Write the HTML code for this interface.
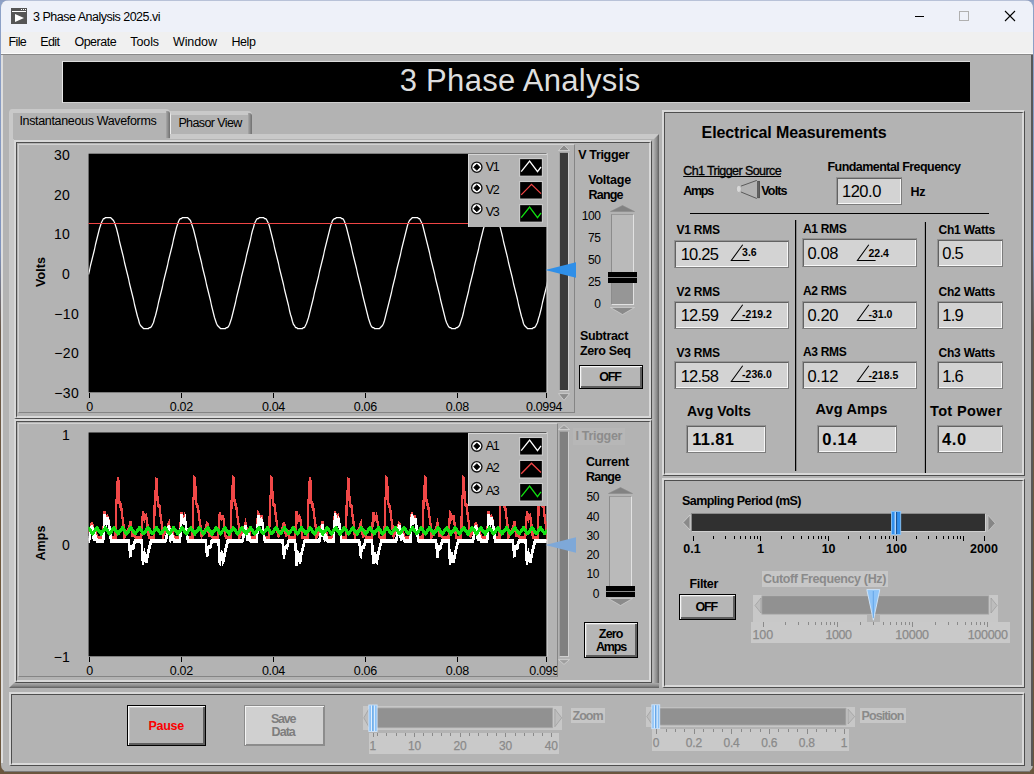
<!DOCTYPE html>
<html><head><meta charset="utf-8"><title>3 Phase Analysis 2025.vi</title>
<style>
html,body{margin:0;padding:0;}
body{width:1034px;height:774px;overflow:hidden;position:relative;background:#5a4632;font-family:"Liberation Sans",sans-serif;}
div,svg{position:absolute;box-sizing:border-box;}
.t{white-space:nowrap;}
.t span{display:inline-block;}
.ind{background:#d3d3d3;border:1px solid;border-color:#949494 #7c7c7c #7c7c7c #949494;box-shadow:inset 1px 1px 0 #626262,inset -1px -1px 0 #f8f8f8;}
.fr{border:1px solid #6e6e6e;box-shadow:inset 0 0 0 1px #e4e4e4;}
.btn{background:#b6b6b6;border:1px solid #000;box-shadow:inset 1px 1px 0 #f6f6f6,inset -2px -2px 0 #5e5e5e,inset 2px 2px 0 #c8c8c8;}
</style></head><body>

<div style="left:0px;top:0px;width:1034px;height:774px;background:linear-gradient(180deg,#8ea2c8 0px,#7f93bd 250px,#6a5848 330px,#70583c 600px,#6a563e 774px);"></div>
<div style="left:1px;top:0px;width:1032px;height:772px;background:#b3b3b3;border-radius:8px 8px 7px 7px;overflow:hidden;"></div>
<div style="left:1px;top:0px;width:1032px;height:32px;background:#eef1f9;border-radius:8px 8px 0 0;"></div>
<div style="left:1px;top:32px;width:1032px;height:21px;background:#f0f0f0;"></div>
<div style="left:1px;top:53px;width:1032px;height:1px;background:#fbfbfb;"></div>
<div style="left:1px;top:54px;width:1032px;height:1px;background:#8a8a8a;"></div>
<div style="left:1px;top:55px;width:2px;height:708px;background:#dedede;"></div>
<div style="left:1031px;top:55px;width:2px;height:711px;background:#585858;"></div>
<div style="left:4px;top:770.5px;width:1026px;height:1.5px;background:#7a7a7a;"></div>
<div style="left:0px;top:0px;width:1034px;height:1px;background:rgba(140,155,190,0.55);"></div>
<svg style="left:11px;top:8px;" width="17" height="17" viewBox="0 0 17 17"><rect x="0" y="0" width="16" height="16" fill="#555"/><rect x="1" y="3" width="14" height="1" fill="#fff"/><rect x="10" y="1" width="1" height="1" fill="#fff"/><rect x="12" y="1" width="1" height="1" fill="#fff"/><rect x="14" y="1" width="1" height="1" fill="#fff"/><path d="M4 6 L13 10 L4 14 Z" fill="#fff"/></svg>
<div class="t" style="top:7.60px;font-size:12.5px;line-height:18px;color:#000;letter-spacing:-0.499px;left:33px;"><span style="">3 Phase Analysis 2025.vi</span></div>
<svg style="left:915px;top:10px;" width="110" height="14" viewBox="0 0 110 14"><path d="M-1 6.5 H9" stroke="#000" stroke-width="1"/><rect x="44.5" y="1.5" width="9" height="9" fill="none" stroke="#b0b0b0" stroke-width="1"/><path d="M90 1 L100 11 M100 1 L90 11" stroke="#000" stroke-width="1.1"/></svg>
<div class="t" style="top:32.70px;font-size:12.5px;line-height:18px;color:#000;letter-spacing:-0.639px;left:8.6px;"><span style="">File</span></div>
<div class="t" style="top:32.70px;font-size:12.5px;line-height:18px;color:#000;letter-spacing:-0.587px;left:40.2px;"><span style="">Edit</span></div>
<div class="t" style="top:32.70px;font-size:12.5px;line-height:18px;color:#000;letter-spacing:-0.482px;left:74.4px;"><span style="">Operate</span></div>
<div class="t" style="top:32.70px;font-size:12.5px;line-height:18px;color:#000;letter-spacing:-0.098px;left:130.3px;"><span style="">Tools</span></div>
<div class="t" style="top:32.70px;font-size:12.5px;line-height:18px;color:#000;letter-spacing:-0.111px;left:173px;"><span style="">Window</span></div>
<div class="t" style="top:32.70px;font-size:12.5px;line-height:18px;color:#000;letter-spacing:-0.405px;left:231.4px;"><span style="">Help</span></div>
<div style="left:62px;top:61px;width:908px;height:42px;background:#000;border-left:1px solid #e8e8e8;border-bottom:1px solid #d0d0d0;border-top:1px solid #dcdcdc;"></div>
<div class="t" style="top:61.00px;font-size:31px;line-height:40px;color:#dedede;letter-spacing:0.307px;left:320px;width:400.307px;text-align:center;"><span style="">3 Phase Analysis</span></div>
<div style="left:9px;top:134px;width:650px;height:554px;background:#b3b3b3;"></div>
<div style="left:9px;top:134px;width:650px;height:5px;background:#c9c9c9;"></div>
<div style="left:9px;top:134px;width:5px;height:554px;background:#c9c9c9;"></div>
<div style="left:654px;top:134px;width:5px;height:554px;background:linear-gradient(90deg,#ababab,#8c8c8c 55%,#5e5e5e);"></div>
<div style="left:9px;top:683px;width:650px;height:5px;background:linear-gradient(180deg,#ababab,#8c8c8c 55%,#5e5e5e);"></div>
<svg style="left:9px;top:683px;" width="5" height="5" viewBox="0 0 5 5"><path d="M0 0 H5 L0 5 Z" fill="#c9c9c9"/></svg>
<svg style="left:654px;top:134px;" width="5" height="5" viewBox="0 0 5 5"><path d="M0 0 H5 L0 5 Z" fill="#c9c9c9"/></svg>
<div style="left:170px;top:111px;width:82px;height:23px;background:#b3b3b3;border-top:4px solid #c9c9c9;border-left:1px solid #ececec;border-radius:0 4px 0 0;"></div>
<div style="left:248px;top:113px;width:4px;height:21px;background:linear-gradient(90deg,#a8a8a8,#707070);border-radius:0 3px 0 0;"></div>
<div class="t" style="top:113.80px;font-size:12.5px;line-height:18px;color:#000;letter-spacing:-0.605px;left:178.4px;"><span style="">Phasor View</span></div>
<div style="left:9px;top:109px;width:161px;height:30px;background:#b3b3b3;border-top:4px solid #c9c9c9;border-left:4px solid #c9c9c9;border-radius:4px 4px 0 0;"></div>
<div style="left:166px;top:111px;width:4px;height:27px;background:linear-gradient(90deg,#a8a8a8,#707070);border-radius:0 3px 0 0;"></div>
<div class="t" style="top:112.00px;font-size:12.5px;line-height:18px;color:#000;letter-spacing:-0.337px;left:19.4px;"><span style="">Instantaneous Waveforms</span></div>
<div style="left:14px;top:140px;width:638px;height:279px;border-left:2px solid #d9d9d9;border-top:2px solid #d9d9d9;border-right:1px solid #4e4e4e;border-bottom:1px solid #4e4e4e;"><div style="left:0;top:0;right:0;bottom:0;border-left:1px solid #4e4e4e;border-top:1px solid #4e4e4e;border-right:2px solid #d9d9d9;border-bottom:2px solid #d9d9d9;"></div></div>
<div style="left:14px;top:419px;width:638px;height:264px;border-left:2px solid #d9d9d9;border-top:2px solid #d9d9d9;border-right:1px solid #4e4e4e;border-bottom:1px solid #4e4e4e;"><div style="left:0;top:0;right:0;bottom:0;border-left:1px solid #4e4e4e;border-top:1px solid #4e4e4e;border-right:2px solid #d9d9d9;border-bottom:2px solid #d9d9d9;"></div></div>
<div style="left:18px;top:144px;width:557px;height:269px;border-left:1px solid #d2d2d2;border-top:1px solid #d2d2d2;border-right:1px solid #858585;border-bottom:1px solid #858585;"></div>
<svg style="left:80px;top:151px;" width="480" height="244" viewBox="0 0 480 244"><rect x="8.60" y="2.70" width="458.00" height="238.60" fill="#000"/></svg>
<svg style="left:545px;top:153px;" width="4" height="240" viewBox="0 0 4 240"><rect x="1.6" y="0" width="1.4" height="239.3" fill="#c8c8c8"/></svg>
<div class="t" style="top:146.00px;font-size:14px;line-height:18px;color:#000;letter-spacing:0.211px;left:-330.2px;width:400.211px;text-align:right;"><span style="">30</span></div>
<div class="t" style="top:185.70px;font-size:14px;line-height:18px;color:#000;letter-spacing:0.211px;left:-330.2px;width:400.211px;text-align:right;"><span style="">20</span></div>
<div class="t" style="top:225.40px;font-size:14px;line-height:18px;color:#000;letter-spacing:0.211px;left:-330.2px;width:400.211px;text-align:right;"><span style="">10</span></div>
<div class="t" style="top:265.00px;font-size:14px;line-height:18px;color:#000;left:-330.2px;width:400.000px;text-align:right;"><span style="">0</span></div>
<div class="t" style="top:304.50px;font-size:14px;line-height:18px;color:#000;letter-spacing:0.417px;left:-321.2px;width:400.417px;text-align:right;"><span style="">−10</span></div>
<div class="t" style="top:344.20px;font-size:14px;line-height:18px;color:#000;letter-spacing:0.417px;left:-321.2px;width:400.417px;text-align:right;"><span style="">−20</span></div>
<div class="t" style="top:383.70px;font-size:14px;line-height:18px;color:#000;letter-spacing:0.417px;left:-321.2px;width:400.417px;text-align:right;"><span style="">−30</span></div>
<div class="t" style="left:0.7000000000000028px;top:263.3px;width:80px;height:18px;line-height:18px;text-align:center;font-size:12.5px;font-weight:bold;letter-spacing:0.1px;transform:rotate(-90deg);">Volts</div>
<div class="t" style="top:397.70px;font-size:12.5px;line-height:18px;color:#000;left:-110.5px;width:400.000px;text-align:center;"><span style="letter-spacing:-0.35px;">0</span></div>
<div class="t" style="top:397.70px;font-size:12.5px;line-height:18px;color:#000;left:-18.69999999999999px;width:400.000px;text-align:center;"><span style="letter-spacing:-0.35px;">0.02</span></div>
<div class="t" style="top:397.70px;font-size:12.5px;line-height:18px;color:#000;left:73.39999999999998px;width:400.000px;text-align:center;"><span style="letter-spacing:-0.35px;">0.04</span></div>
<div class="t" style="top:397.70px;font-size:12.5px;line-height:18px;color:#000;left:165.3px;width:400.000px;text-align:center;"><span style="letter-spacing:-0.35px;">0.06</span></div>
<div class="t" style="top:397.70px;font-size:12.5px;line-height:18px;color:#000;left:257.3px;width:400.000px;text-align:center;"><span style="letter-spacing:-0.35px;">0.08</span></div>
<div class="t" style="top:397.70px;font-size:12.5px;line-height:18px;color:#000;left:162.20000000000005px;width:400.000px;text-align:right;"><span style="letter-spacing:-0.35px;">0.0994</span></div>
<div style="left:89px;top:393px;width:1px;height:5px;background:#000;"></div>
<div style="left:181px;top:393px;width:1px;height:5px;background:#000;"></div>
<div style="left:273px;top:393px;width:1px;height:5px;background:#000;"></div>
<div style="left:365px;top:393px;width:1px;height:5px;background:#000;"></div>
<div style="left:457px;top:393px;width:1px;height:5px;background:#000;"></div>
<div style="left:546px;top:393px;width:1px;height:5px;background:#000;"></div>
<div style="left:18px;top:423px;width:540px;height:254px;border-left:1px solid #d2d2d2;border-top:1px solid #d2d2d2;border-right:1px solid #858585;border-bottom:1px solid #858585;"></div>
<svg style="left:80px;top:430px;" width="480" height="229" viewBox="0 0 480 229"><rect x="8.60" y="2.50" width="458.00" height="223.80" fill="#000"/></svg>
<svg style="left:545px;top:432px;" width="4" height="225" viewBox="0 0 4 225"><rect x="1.6" y="0" width="1.4" height="224.3" fill="#c8c8c8"/></svg>
<div class="t" style="top:426.00px;font-size:14px;line-height:18px;color:#000;left:-330.2px;width:400.000px;text-align:right;"><span style="">1</span></div>
<div class="t" style="top:536.20px;font-size:14px;line-height:18px;color:#000;left:-330.2px;width:400.000px;text-align:right;"><span style="">0</span></div>
<div class="t" style="top:648.20px;font-size:14px;line-height:18px;color:#000;letter-spacing:0.016px;left:-330.2px;width:400.016px;text-align:right;"><span style="">−1</span></div>
<div class="t" style="left:1.2000000000000028px;top:534px;width:80px;height:18px;line-height:18px;text-align:center;font-size:12.5px;font-weight:bold;letter-spacing:0.1px;transform:rotate(-90deg);">Amps</div>
<div class="t" style="top:661.70px;font-size:12.5px;line-height:18px;color:#000;left:-110.5px;width:400.000px;text-align:center;"><span style="letter-spacing:-0.35px;">0</span></div>
<div class="t" style="top:661.70px;font-size:12.5px;line-height:18px;color:#000;left:-18.69999999999999px;width:400.000px;text-align:center;"><span style="letter-spacing:-0.35px;">0.02</span></div>
<div class="t" style="top:661.70px;font-size:12.5px;line-height:18px;color:#000;left:73.39999999999998px;width:400.000px;text-align:center;"><span style="letter-spacing:-0.35px;">0.04</span></div>
<div class="t" style="top:661.70px;font-size:12.5px;line-height:18px;color:#000;left:165.3px;width:400.000px;text-align:center;"><span style="letter-spacing:-0.35px;">0.06</span></div>
<div class="t" style="top:661.70px;font-size:12.5px;line-height:18px;color:#000;left:257.3px;width:400.000px;text-align:center;"><span style="letter-spacing:-0.35px;">0.08</span></div>
<div style="left:529.3px;top:661px;width:27.700000000000045px;height:20px;overflow:hidden;">
<div class="t" style="top:0.70px;font-size:12.5px;line-height:18px;color:#000;left:0px;"><span style="letter-spacing:-0.35px;">0.0994</span></div>
</div>
<div style="left:89px;top:657px;width:1px;height:5px;background:#000;"></div>
<div style="left:181px;top:657px;width:1px;height:5px;background:#000;"></div>
<div style="left:273px;top:657px;width:1px;height:5px;background:#000;"></div>
<div style="left:365px;top:657px;width:1px;height:5px;background:#000;"></div>
<div style="left:457px;top:657px;width:1px;height:5px;background:#000;"></div>
<div style="left:546px;top:657px;width:1px;height:5px;background:#000;"></div>
<svg style="left:88px;top:154px;overflow:hidden;clip-path:inset(0 1.4px 0 0.6px);" width="460" height="238" viewBox="0 0 460 238"><polyline points="0.5,120.5 1.5,116.5 2.5,111.5 3.5,107.5 4.5,103.5 5.5,99.5 6.5,95.5 7.5,90.5 8.5,86.5 9.5,82.5 10.5,78.5 11.5,74.5 12.5,71.5 13.5,68.5 14.5,66.5 15.5,64.5 16.5,64.5 17.5,63.5 18.5,63.5 19.5,63.5 20.5,63.5 21.5,63.5 22.5,63.5 23.5,64.5 24.5,65.5 25.5,66.5 26.5,68.5 27.5,71.5 28.5,74.5 29.5,78.5 30.5,82.5 31.5,87.5 32.5,91.5 33.5,95.5 34.5,99.5 35.5,103.5 36.5,108.5 37.5,112.5 38.5,116.5 39.5,120.5 40.5,124.5 41.5,129.5 42.5,133.5 43.5,137.5 44.5,141.5 45.5,145.5 46.5,150.5 47.5,154.5 48.5,158.5 49.5,162.5 50.5,165.5 51.5,169.5 52.5,171.5 53.5,172.5 54.5,173.5 55.5,174.5 56.5,174.5 57.5,174.5 58.5,174.5 59.5,174.5 60.5,174.5 61.5,173.5 62.5,173.5 63.5,172.5 64.5,170.5 65.5,168.5 66.5,164.5 67.5,161.5 68.5,157.5 69.5,153.5 70.5,148.5 71.5,144.5 72.5,140.5 73.5,136.5 74.5,132.5 75.5,127.5 76.5,123.5 77.5,119.5 78.5,115.5 79.5,111.5 80.5,106.5 81.5,102.5 82.5,98.5 83.5,94.5 84.5,90.5 85.5,85.5 86.5,81.5 87.5,77.5 88.5,73.5 89.5,70.5 90.5,67.5 91.5,65.5 92.5,64.5 93.5,64.5 94.5,63.5 95.5,63.5 96.5,63.5 97.5,63.5 98.5,63.5 99.5,63.5 100.5,64.5 101.5,65.5 102.5,66.5 103.5,69.5 104.5,72.5 105.5,75.5 106.5,79.5 107.5,83.5 108.5,87.5 109.5,92.5 110.5,96.5 111.5,100.5 112.5,104.5 113.5,108.5 114.5,113.5 115.5,117.5 116.5,121.5 117.5,125.5 118.5,130.5 119.5,134.5 120.5,138.5 121.5,142.5 122.5,146.5 123.5,151.5 124.5,155.5 125.5,159.5 126.5,163.5 127.5,166.5 128.5,169.5 129.5,171.5 130.5,172.5 131.5,173.5 132.5,174.5 133.5,174.5 134.5,174.5 135.5,174.5 136.5,174.5 137.5,174.5 138.5,173.5 139.5,173.5 140.5,172.5 141.5,170.5 142.5,167.5 143.5,164.5 144.5,160.5 145.5,156.5 146.5,152.5 147.5,148.5 148.5,143.5 149.5,139.5 150.5,135.5 151.5,131.5 152.5,127.5 153.5,122.5 154.5,118.5 155.5,114.5 156.5,110.5 157.5,106.5 158.5,101.5 159.5,97.5 160.5,93.5 161.5,89.5 162.5,85.5 163.5,80.5 164.5,76.5 165.5,73.5 166.5,69.5 167.5,67.5 168.5,65.5 169.5,64.5 170.5,64.5 171.5,63.5 172.5,63.5 173.5,63.5 174.5,63.5 175.5,63.5 176.5,64.5 177.5,64.5 178.5,65.5 179.5,67.5 180.5,69.5 181.5,72.5 182.5,76.5 183.5,80.5 184.5,84.5 185.5,88.5 186.5,93.5 187.5,97.5 188.5,101.5 189.5,105.5 190.5,109.5 191.5,114.5 192.5,118.5 193.5,122.5 194.5,126.5 195.5,130.5 196.5,135.5 197.5,139.5 198.5,143.5 199.5,147.5 200.5,151.5 201.5,156.5 202.5,160.5 203.5,163.5 204.5,167.5 205.5,170.5 206.5,171.5 207.5,173.5 208.5,173.5 209.5,174.5 210.5,174.5 211.5,174.5 212.5,174.5 213.5,174.5 214.5,174.5 215.5,173.5 216.5,173.5 217.5,171.5 218.5,169.5 219.5,166.5 220.5,163.5 221.5,159.5 222.5,155.5 223.5,151.5 224.5,147.5 225.5,143.5 226.5,138.5 227.5,134.5 228.5,130.5 229.5,126.5 230.5,122.5 231.5,117.5 232.5,113.5 233.5,109.5 234.5,105.5 235.5,101.5 236.5,96.5 237.5,92.5 238.5,88.5 239.5,84.5 240.5,80.5 241.5,76.5 242.5,72.5 243.5,69.5 244.5,66.5 245.5,65.5 246.5,64.5 247.5,64.5 248.5,63.5 249.5,63.5 250.5,63.5 251.5,63.5 252.5,63.5 253.5,64.5 254.5,64.5 255.5,65.5 256.5,67.5 257.5,70.5 258.5,73.5 259.5,77.5 260.5,81.5 261.5,85.5 262.5,89.5 263.5,93.5 264.5,98.5 265.5,102.5 266.5,106.5 267.5,110.5 268.5,114.5 269.5,119.5 270.5,123.5 271.5,127.5 272.5,131.5 273.5,135.5 274.5,140.5 275.5,144.5 276.5,148.5 277.5,152.5 278.5,156.5 279.5,160.5 280.5,164.5 281.5,167.5 282.5,170.5 283.5,172.5 284.5,173.5 285.5,173.5 286.5,174.5 287.5,174.5 288.5,174.5 289.5,174.5 290.5,174.5 291.5,174.5 292.5,173.5 293.5,172.5 294.5,171.5 295.5,169.5 296.5,166.5 297.5,162.5 298.5,158.5 299.5,154.5 300.5,150.5 301.5,146.5 302.5,142.5 303.5,138.5 304.5,133.5 305.5,129.5 306.5,125.5 307.5,121.5 308.5,116.5 309.5,112.5 310.5,108.5 311.5,104.5 312.5,100.5 313.5,95.5 314.5,91.5 315.5,87.5 316.5,83.5 317.5,79.5 318.5,75.5 319.5,71.5 320.5,68.5 321.5,66.5 322.5,65.5 323.5,64.5 324.5,63.5 325.5,63.5 326.5,63.5 327.5,63.5 328.5,63.5 329.5,63.5 330.5,64.5 331.5,64.5 332.5,66.5 333.5,68.5 334.5,70.5 335.5,74.5 336.5,78.5 337.5,82.5 338.5,86.5 339.5,90.5 340.5,94.5 341.5,98.5 342.5,103.5 343.5,107.5 344.5,111.5 345.5,115.5 346.5,119.5 347.5,124.5 348.5,128.5 349.5,132.5 350.5,136.5 351.5,140.5 352.5,145.5 353.5,149.5 354.5,153.5 355.5,157.5 356.5,161.5 357.5,165.5 358.5,168.5 359.5,170.5 360.5,172.5 361.5,173.5 362.5,173.5 363.5,174.5 364.5,174.5 365.5,174.5 366.5,174.5 367.5,174.5 368.5,173.5 369.5,173.5 370.5,172.5 371.5,171.5 372.5,168.5 373.5,165.5 374.5,162.5 375.5,158.5 376.5,153.5 377.5,149.5 378.5,145.5 379.5,141.5 380.5,137.5 381.5,132.5 382.5,128.5 383.5,124.5 384.5,120.5 385.5,116.5 386.5,111.5 387.5,107.5 388.5,103.5 389.5,99.5 390.5,95.5 391.5,90.5 392.5,86.5 393.5,82.5 394.5,78.5 395.5,74.5 396.5,71.5 397.5,68.5 398.5,66.5 399.5,64.5 400.5,64.5 401.5,63.5 402.5,63.5 403.5,63.5 404.5,63.5 405.5,63.5 406.5,63.5 407.5,64.5 408.5,65.5 409.5,66.5 410.5,68.5 411.5,71.5 412.5,74.5 413.5,78.5 414.5,82.5 415.5,87.5 416.5,91.5 417.5,95.5 418.5,99.5 419.5,103.5 420.5,108.5 421.5,112.5 422.5,116.5 423.5,120.5 424.5,124.5 425.5,129.5 426.5,133.5 427.5,137.5 428.5,141.5 429.5,145.5 430.5,150.5 431.5,154.5 432.5,158.5 433.5,162.5 434.5,165.5 435.5,169.5 436.5,171.5 437.5,172.5 438.5,173.5 439.5,174.5 440.5,174.5 441.5,174.5 442.5,174.5 443.5,174.5 444.5,174.5 445.5,173.5 446.5,173.5 447.5,172.5 448.5,170.5 449.5,168.5 450.5,164.5 451.5,161.5 452.5,157.5 453.5,153.5 454.5,148.5 455.5,144.5 456.5,140.5 457.5,136.5 458.5,132.5 459.5,127.5 460.5,123.5" fill="none" stroke="#fff" stroke-width="1.25" stroke-linejoin="round"/><rect x="0" y="69" width="460" height="1" fill="#f04545"/></svg>
<svg style="left:88px;top:433px;overflow:hidden;clip-path:inset(0 1.4px 0 0.6px);" width="460" height="223" viewBox="0 0 460 223"><polyline points="0.0,100.1 0.5,99.0 1.0,98.0 1.5,97.1 2.0,96.1 2.5,95.2 3.0,93.3 3.5,91.1 4.0,88.9 4.5,92.0 5.0,96.4 5.5,100.2 6.0,103.3 6.5,101.5 7.0,97.6 7.5,97.8 8.0,99.1 8.5,101.8 9.0,104.5 9.5,104.5 10.0,104.5 10.5,104.5 11.0,104.5 11.5,104.5 12.0,104.5 12.5,104.5 13.0,104.5 13.5,104.5 14.0,104.5 14.5,104.5 15.0,104.5 15.5,95.6 16.0,86.6 16.5,77.7 17.0,80.8 17.5,83.9 18.0,87.0 18.5,85.7 19.0,84.4 19.5,83.1 20.0,83.8 20.5,87.4 21.0,91.0 21.5,95.8 22.0,100.6 22.5,104.5 23.0,104.5 23.5,104.5 24.0,104.5 24.5,104.5 25.0,104.5 25.5,104.5 26.0,104.5 26.5,104.5 27.0,104.5 27.5,104.5 28.0,82.6 28.5,66.9 29.0,65.0 29.5,50.2 30.0,44.6 30.5,48.5 31.0,66.0 31.5,69.5 32.0,73.0 32.5,72.5 33.0,72.0 33.5,76.8 34.0,81.5 34.5,85.2 35.0,88.7 35.5,92.1 36.0,99.0 36.5,104.1 37.0,103.0 37.5,102.0 38.0,100.9 38.5,99.9 39.0,98.8 39.5,97.8 40.0,96.9 40.5,95.9 41.0,95.0 41.5,92.8 42.0,90.7 42.5,88.5 43.0,92.9 43.5,97.2 44.0,100.8 44.5,103.9 45.0,100.5 45.5,97.6 46.0,97.9 46.5,99.6 47.0,102.3 47.5,104.5 48.0,104.5 48.5,104.5 49.0,104.5 49.5,104.5 50.0,104.5 50.5,104.5 51.0,104.5 51.5,104.5 52.0,104.5 52.5,104.5 53.0,104.5 53.5,102.7 54.0,93.8 54.5,84.8 55.0,78.3 55.5,81.4 56.0,84.5 56.5,86.7 57.0,85.4 57.5,84.1 58.0,82.8 58.5,84.5 59.0,88.1 59.5,92.0 60.0,96.8 60.5,101.6 61.0,104.5 61.5,104.5 62.0,104.5 62.5,104.5 63.0,104.5 63.5,104.5 64.0,104.5 64.5,104.5 65.0,104.5 65.5,104.5 66.0,104.5 66.5,75.3 67.0,66.5 67.5,62.0 68.0,47.3 68.5,44.7 69.0,52.0 69.5,66.7 70.0,70.2 70.5,72.9 71.0,72.4 71.5,73.0 72.0,77.7 72.5,82.5 73.0,85.9 73.5,89.4 74.0,92.8 74.5,100.8 75.0,103.9 75.5,102.8 76.0,101.8 76.5,100.7 77.0,99.7 77.5,98.6 78.0,97.6 78.5,96.7 79.0,95.8 79.5,94.6 80.0,92.4 80.5,90.2 81.0,89.4 81.5,93.8 82.0,98.1 82.5,101.4 83.0,104.5 83.5,99.5 84.0,97.7 84.5,97.9 85.0,100.2 85.5,102.9 86.0,104.5 86.5,104.5 87.0,104.5 87.5,104.5 88.0,104.5 88.5,104.5 89.0,104.5 89.5,104.5 90.0,104.5 90.5,104.5 91.0,104.5 91.5,104.5 92.0,100.9 92.5,92.0 93.0,83.1 93.5,78.9 94.0,82.0 94.5,85.1 95.0,86.5 95.5,85.2 96.0,83.9 96.5,82.6 97.0,85.2 97.5,88.8 98.0,92.9 98.5,97.8 99.0,102.6 99.5,104.5 100.0,104.5 100.5,104.5 101.0,104.5 101.5,104.5 102.0,104.5 102.5,104.5 103.0,104.5 103.5,104.5 104.0,104.5 104.5,104.5 105.0,68.0 105.5,66.1 106.0,59.1 106.5,44.3 107.0,44.8 107.5,55.5 108.0,67.4 108.5,70.9 109.0,72.8 109.5,72.3 110.0,73.9 110.5,78.7 111.0,83.2 111.5,86.6 112.0,90.1 112.5,93.5 113.0,102.7 113.5,103.7 114.0,102.6 114.5,101.6 115.0,100.5 115.5,99.5 116.0,98.4 116.5,97.4 117.0,96.5 117.5,95.6 118.0,94.1 118.5,92.0 119.0,89.8 119.5,90.2 120.0,94.6 120.5,99.0 121.0,102.1 121.5,103.5 122.0,98.5 122.5,97.7 123.0,98.0 123.5,100.7 124.0,103.4 124.5,104.5 125.0,104.5 125.5,104.5 126.0,104.5 126.5,104.5 127.0,104.5 127.5,104.5 128.0,104.5 128.5,104.5 129.0,104.5 129.5,104.5 130.0,104.5 130.5,99.1 131.0,90.2 131.5,81.3 132.0,79.6 132.5,82.7 133.0,85.8 133.5,86.2 134.0,84.9 134.5,83.6 135.0,82.3 135.5,85.9 136.0,89.6 136.5,93.9 137.0,98.7 137.5,103.5 138.0,104.5 138.5,104.5 139.0,104.5 139.5,104.5 140.0,104.5 140.5,104.5 141.0,104.5 141.5,104.5 142.0,104.5 142.5,104.5 143.0,97.2 143.5,67.6 144.0,65.8 144.5,56.1 145.0,44.4 145.5,44.9 146.0,59.0 146.5,68.1 147.0,71.6 147.5,72.7 148.0,72.2 148.5,74.9 149.0,79.6 149.5,83.9 150.0,87.3 150.5,90.8 151.0,95.3 151.5,104.5 152.0,103.5 152.5,102.4 153.0,101.4 153.5,100.3 154.0,99.3 154.5,98.2 155.0,97.2 155.5,96.3 156.0,95.4 156.5,93.7 157.0,91.5 157.5,89.4 158.0,91.1 158.5,95.5 159.0,99.6 159.5,102.7 160.0,102.5 160.5,97.5 161.0,97.8 161.5,98.5 162.0,101.2 162.5,104.0 163.0,104.5 163.5,104.5 164.0,104.5 164.5,104.5 165.0,104.5 165.5,104.5 166.0,104.5 166.5,104.5 167.0,104.5 167.5,104.5 168.0,104.5 168.5,104.5 169.0,97.4 169.5,88.4 170.0,79.5 170.5,80.2 171.0,83.3 171.5,86.4 172.0,86.0 172.5,84.6 173.0,83.3 173.5,83.0 174.0,86.6 174.5,90.3 175.0,94.9 175.5,99.7 176.0,104.5 176.5,104.5 177.0,104.5 177.5,104.5 178.0,104.5 178.5,104.5 179.0,104.5 179.5,104.5 180.0,104.5 180.5,104.5 181.0,104.5 181.5,89.9 182.0,67.2 182.5,65.4 183.0,53.2 183.5,44.5 184.0,45.0 184.5,62.5 185.0,68.8 185.5,72.3 186.0,72.6 186.5,72.1 187.0,75.8 187.5,80.6 188.0,84.6 188.5,88.0 189.0,91.4 189.5,97.2 190.0,104.3 190.5,103.2 191.0,102.2 191.5,101.1 192.0,100.1 192.5,99.0 193.0,98.0 193.5,97.1 194.0,96.1 194.5,95.2 195.0,93.3 195.5,91.1 196.0,88.9 196.5,92.0 197.0,96.4 197.5,100.2 198.0,103.3 198.5,101.5 199.0,97.6 199.5,97.8 200.0,99.1 200.5,101.8 201.0,104.5 201.5,104.5 202.0,104.5 202.5,104.5 203.0,104.5 203.5,104.5 204.0,104.5 204.5,104.5 205.0,104.5 205.5,104.5 206.0,104.5 206.5,104.5 207.0,104.5 207.5,95.6 208.0,86.6 208.5,77.7 209.0,80.8 209.5,83.9 210.0,87.0 210.5,85.7 211.0,84.4 211.5,83.1 212.0,83.8 212.5,87.4 213.0,91.0 213.5,95.8 214.0,100.6 214.5,104.5 215.0,104.5 215.5,104.5 216.0,104.5 216.5,104.5 217.0,104.5 217.5,104.5 218.0,104.5 218.5,104.5 219.0,104.5 219.5,104.5 220.0,82.6 220.5,66.9 221.0,65.0 221.5,50.2 222.0,44.6 222.5,48.5 223.0,66.0 223.5,69.5 224.0,73.0 224.5,72.5 225.0,72.0 225.5,76.8 226.0,81.5 226.5,85.2 227.0,88.7 227.5,92.1 228.0,99.0 228.5,104.1 229.0,103.0 229.5,102.0 230.0,100.9 230.5,99.9 231.0,98.8 231.5,97.8 232.0,96.9 232.5,95.9 233.0,95.0 233.5,92.8 234.0,90.7 234.5,88.5 235.0,92.9 235.5,97.3 236.0,100.8 236.5,103.9 237.0,100.5 237.5,97.6 238.0,97.9 238.5,99.6 239.0,102.3 239.5,104.5 240.0,104.5 240.5,104.5 241.0,104.5 241.5,104.5 242.0,104.5 242.5,104.5 243.0,104.5 243.5,104.5 244.0,104.5 244.5,104.5 245.0,104.5 245.5,102.7 246.0,93.8 246.5,84.8 247.0,78.3 247.5,81.4 248.0,84.5 248.5,86.7 249.0,85.4 249.5,84.1 250.0,82.8 250.5,84.5 251.0,88.1 251.5,92.0 252.0,96.8 252.5,101.6 253.0,104.5 253.5,104.5 254.0,104.5 254.5,104.5 255.0,104.5 255.5,104.5 256.0,104.5 256.5,104.5 257.0,104.5 257.5,104.5 258.0,104.5 258.5,75.3 259.0,66.5 259.5,62.0 260.0,47.3 260.5,44.7 261.0,52.0 261.5,66.7 262.0,70.2 262.5,72.9 263.0,72.4 263.5,73.0 264.0,77.7 264.5,82.5 265.0,85.9 265.5,89.4 266.0,92.8 266.5,100.8 267.0,103.9 267.5,102.8 268.0,101.8 268.5,100.7 269.0,99.7 269.5,98.6 270.0,97.6 270.5,96.7 271.0,95.8 271.5,94.6 272.0,92.4 272.5,90.2 273.0,89.4 273.5,93.8 274.0,98.1 274.5,101.4 275.0,104.5 275.5,99.5 276.0,97.7 276.5,97.9 277.0,100.2 277.5,102.9 278.0,104.5 278.5,104.5 279.0,104.5 279.5,104.5 280.0,104.5 280.5,104.5 281.0,104.5 281.5,104.5 282.0,104.5 282.5,104.5 283.0,104.5 283.5,104.5 284.0,100.9 284.5,92.0 285.0,83.1 285.5,78.9 286.0,82.0 286.5,85.1 287.0,86.5 287.5,85.2 288.0,83.9 288.5,82.6 289.0,85.2 289.5,88.8 290.0,92.9 290.5,97.8 291.0,102.6 291.5,104.5 292.0,104.5 292.5,104.5 293.0,104.5 293.5,104.5 294.0,104.5 294.5,104.5 295.0,104.5 295.5,104.5 296.0,104.5 296.5,104.5 297.0,68.0 297.5,66.1 298.0,59.1 298.5,44.3 299.0,44.8 299.5,55.5 300.0,67.4 300.5,70.9 301.0,72.8 301.5,72.3 302.0,73.9 302.5,78.7 303.0,83.2 303.5,86.6 304.0,90.1 304.5,93.5 305.0,102.7 305.5,103.7 306.0,102.6 306.5,101.6 307.0,100.5 307.5,99.5 308.0,98.4 308.5,97.4 309.0,96.5 309.5,95.6 310.0,94.1 310.5,92.0 311.0,89.8 311.5,90.3 312.0,94.6 312.5,99.0 313.0,102.1 313.5,103.5 314.0,98.5 314.5,97.7 315.0,98.0 315.5,100.7 316.0,103.4 316.5,104.5 317.0,104.5 317.5,104.5 318.0,104.5 318.5,104.5 319.0,104.5 319.5,104.5 320.0,104.5 320.5,104.5 321.0,104.5 321.5,104.5 322.0,104.5 322.5,99.1 323.0,90.2 323.5,81.3 324.0,79.6 324.5,82.7 325.0,85.8 325.5,86.2 326.0,84.9 326.5,83.6 327.0,82.3 327.5,85.9 328.0,89.6 328.5,93.9 329.0,98.7 329.5,103.5 330.0,104.5 330.5,104.5 331.0,104.5 331.5,104.5 332.0,104.5 332.5,104.5 333.0,104.5 333.5,104.5 334.0,104.5 334.5,104.5 335.0,97.2 335.5,67.6 336.0,65.7 336.5,56.1 337.0,44.4 337.5,44.9 338.0,59.0 338.5,68.1 339.0,71.6 339.5,72.7 340.0,72.2 340.5,74.9 341.0,79.6 341.5,83.9 342.0,87.3 342.5,90.8 343.0,95.3 343.5,104.5 344.0,103.5 344.5,102.4 345.0,101.4 345.5,100.3 346.0,99.3 346.5,98.2 347.0,97.2 347.5,96.3 348.0,95.4 348.5,93.7 349.0,91.5 349.5,89.4 350.0,91.1 350.5,95.5 351.0,99.6 351.5,102.7 352.0,102.5 352.5,97.5 353.0,97.8 353.5,98.5 354.0,101.3 354.5,104.0 355.0,104.5 355.5,104.5 356.0,104.5 356.5,104.5 357.0,104.5 357.5,104.5 358.0,104.5 358.5,104.5 359.0,104.5 359.5,104.5 360.0,104.5 360.5,104.5 361.0,97.4 361.5,88.4 362.0,79.5 362.5,80.2 363.0,83.3 363.5,86.4 364.0,86.0 364.5,84.6 365.0,83.3 365.5,83.0 366.0,86.7 366.5,90.3 367.0,94.9 367.5,99.7 368.0,104.5 368.5,104.5 369.0,104.5 369.5,104.5 370.0,104.5 370.5,104.5 371.0,104.5 371.5,104.5 372.0,104.5 372.5,104.5 373.0,104.5 373.5,89.9 374.0,67.2 374.5,65.4 375.0,53.2 375.5,44.5 376.0,45.0 376.5,62.5 377.0,68.8 377.5,72.3 378.0,72.6 378.5,72.1 379.0,75.8 379.5,80.6 380.0,84.6 380.5,88.0 381.0,91.4 381.5,97.2 382.0,104.3 382.5,103.2 383.0,102.2 383.5,101.1 384.0,100.1 384.5,99.0 385.0,98.0 385.5,97.1 386.0,96.1 386.5,95.2 387.0,93.3 387.5,91.1 388.0,88.9 388.5,92.0 389.0,96.4 389.5,100.2 390.0,103.3 390.5,101.5 391.0,97.6 391.5,97.8 392.0,99.1 392.5,101.8 393.0,104.5 393.5,104.5 394.0,104.5 394.5,104.5 395.0,104.5 395.5,104.5 396.0,104.5 396.5,104.5 397.0,104.5 397.5,104.5 398.0,104.5 398.5,104.5 399.0,104.5 399.5,95.6 400.0,86.6 400.5,77.7 401.0,80.8 401.5,83.9 402.0,87.0 402.5,85.7 403.0,84.4 403.5,83.1 404.0,83.8 404.5,87.4 405.0,91.0 405.5,95.8 406.0,100.6 406.5,104.5 407.0,104.5 407.5,104.5 408.0,104.5 408.5,104.5 409.0,104.5 409.5,104.5 410.0,104.5 410.5,104.5 411.0,104.5 411.5,104.5 412.0,82.6 412.5,66.9 413.0,65.0 413.5,50.2 414.0,44.6 414.5,48.5 415.0,66.0 415.5,69.5 416.0,73.0 416.5,72.5 417.0,72.0 417.5,76.8 418.0,81.5 418.5,85.3 419.0,88.7 419.5,92.1 420.0,99.0 420.5,104.1 421.0,103.0 421.5,102.0 422.0,100.9 422.5,99.9 423.0,98.8 423.5,97.8 424.0,96.9 424.5,95.9 425.0,95.0 425.5,92.8 426.0,90.7 426.5,88.5 427.0,92.9 427.5,97.3 428.0,100.8 428.5,103.9 429.0,100.5 429.5,97.6 430.0,97.9 430.5,99.6 431.0,102.3 431.5,104.5 432.0,104.5 432.5,104.5 433.0,104.5 433.5,104.5 434.0,104.5 434.5,104.5 435.0,104.5 435.5,104.5 436.0,104.5 436.5,104.5 437.0,104.5 437.5,102.7 438.0,93.8 438.5,84.8 439.0,78.3 439.5,81.4 440.0,84.5 440.5,86.7 441.0,85.4 441.5,84.1 442.0,82.8 442.5,84.5 443.0,88.1 443.5,92.0 444.0,96.8 444.5,101.6 445.0,104.5 445.5,104.5 446.0,104.5 446.5,104.5 447.0,104.5 447.5,104.5 448.0,104.5 448.5,104.5 449.0,104.5 449.5,104.5 450.0,104.5 450.5,75.3 451.0,66.5 451.5,62.0 452.0,47.3 452.5,44.7 453.0,52.0 453.5,66.7 454.0,70.2 454.5,72.9 455.0,72.4 455.5,73.0 456.0,77.7 456.5,82.5 457.0,85.9 457.5,89.4 458.0,92.8 458.5,100.8 459.0,103.9 459.5,102.8 460.0,101.8" fill="none" stroke="#f04848" stroke-width="2.3" stroke-linejoin="miter" shape-rendering="crispEdges"/><polyline transform="translate(0,-0.75)" points="0.0,107.6 0.5,107.6 1.0,107.6 1.5,105.2 2.0,102.9 2.5,100.5 3.0,97.9 3.5,95.2 4.0,92.5 4.5,95.7 5.0,100.2 5.5,104.5 6.0,106.8 6.5,102.5 7.0,101.7 7.5,103.1 8.0,104.7 8.5,106.3 9.0,107.6 9.5,107.6 10.0,107.6 10.5,107.6 11.0,107.6 11.5,107.6 12.0,107.6 12.5,107.6 13.0,107.6 13.5,107.6 14.0,107.6 14.5,107.6 15.0,107.6 15.5,105.4 16.0,94.3 16.5,83.2 17.0,83.1 17.5,85.8 18.0,88.4 18.5,90.3 19.0,89.1 19.5,87.9 20.0,86.8 20.5,88.4 21.0,91.8 21.5,95.3 22.0,99.3 22.5,103.5 23.0,107.6 23.5,107.6 24.0,107.6 24.5,107.6 25.0,107.6 25.5,107.6 26.0,107.6 26.5,107.6 27.0,107.6 27.5,107.6 28.0,107.6 28.5,107.6 29.0,107.6 29.5,107.6 30.0,107.6 30.5,107.6 31.0,107.6 31.5,107.6 32.0,107.6 32.5,107.6 33.0,107.6 33.5,107.6 34.0,107.6 34.5,107.6 35.0,107.6 35.5,107.6 36.0,107.6 36.5,107.6 37.0,107.6 37.5,107.6 38.0,107.6 38.5,107.6 39.0,107.6 39.5,107.6 40.0,107.6 40.5,107.6 41.0,108.8 41.5,114.8 42.0,120.4 42.5,123.6 43.0,117.5 43.5,114.6 44.0,114.1 44.5,113.7 45.0,114.1 45.5,114.6 46.0,112.0 46.5,109.6 47.0,107.6 47.5,107.6 48.0,107.6 48.5,107.6 49.0,107.6 49.5,107.6 50.0,107.6 50.5,107.6 51.0,107.6 51.5,107.6 52.0,107.6 52.5,107.6 53.0,107.6 53.5,107.6 54.0,114.4 54.5,124.8 55.0,131.5 55.5,126.2 56.0,122.2 56.5,120.2 57.0,121.9 57.5,124.5 58.0,127.5 58.5,129.3 59.0,125.8 59.5,122.5 60.0,120.3 60.5,118.0 61.0,116.0 61.5,114.0 62.0,112.0 62.5,109.8 63.0,107.6 63.5,107.6 64.0,107.6 64.5,107.6 65.0,107.6 65.5,107.6 66.0,107.6 66.5,107.6 67.0,107.6 67.5,107.6 68.0,107.6 68.5,107.6 69.0,107.6 69.5,107.6 70.0,107.6 70.5,107.6 71.0,107.6 71.5,107.6 72.0,107.6 72.5,107.6 73.0,107.6 73.5,107.6 74.0,107.6 74.5,107.6 75.0,107.6 75.5,107.6 76.0,107.6 76.5,107.6 77.0,107.6 77.5,107.6 78.0,106.6 78.5,104.3 79.0,101.9 79.5,99.5 80.0,96.8 80.5,94.1 81.0,92.9 81.5,97.5 82.0,102.1 82.5,106.1 83.0,105.0 83.5,100.8 84.0,102.3 84.5,103.7 85.0,105.3 85.5,106.9 86.0,107.6 86.5,107.6 87.0,107.6 87.5,107.6 88.0,107.6 88.5,107.6 89.0,107.6 89.5,107.6 90.0,107.6 90.5,107.6 91.0,107.6 91.5,107.6 92.0,107.6 92.5,100.9 93.0,89.9 93.5,81.5 94.0,84.2 94.5,86.8 95.0,89.4 95.5,89.8 96.0,88.6 96.5,87.5 97.0,86.3 97.5,89.8 98.0,93.2 98.5,96.8 99.0,101.0 99.5,105.1 100.0,107.6 100.5,107.6 101.0,107.6 101.5,107.6 102.0,107.6 102.5,107.6 103.0,107.6 103.5,107.6 104.0,107.6 104.5,107.6 105.0,107.6 105.5,107.6 106.0,107.6 106.5,107.6 107.0,107.6 107.5,107.6 108.0,107.6 108.5,107.6 109.0,107.6 109.5,107.6 110.0,107.6 110.5,107.6 111.0,107.6 111.5,107.6 112.0,107.6 112.5,107.6 113.0,107.6 113.5,107.6 114.0,107.6 114.5,107.6 115.0,107.6 115.5,107.6 116.0,107.6 116.5,107.6 117.0,107.6 117.5,107.6 118.0,111.2 118.5,117.1 119.0,122.6 119.5,121.1 120.0,115.0 120.5,114.4 121.0,113.8 121.5,113.9 122.0,114.3 122.5,113.6 123.0,111.0 123.5,108.8 124.0,107.6 124.5,107.6 125.0,107.6 125.5,107.6 126.0,107.6 126.5,107.6 127.0,107.6 127.5,107.6 128.0,107.6 128.5,107.6 129.0,107.6 129.5,107.6 130.0,107.6 130.5,107.6 131.0,119.0 131.5,128.7 132.0,129.4 132.5,124.1 133.0,121.4 133.5,120.3 134.0,122.9 134.5,125.6 135.0,128.8 135.5,127.9 136.0,124.4 136.5,121.6 137.0,119.4 137.5,117.2 138.0,115.2 138.5,113.2 139.0,111.1 139.5,108.9 140.0,107.6 140.5,107.6 141.0,107.6 141.5,107.6 142.0,107.6 142.5,107.6 143.0,107.6 143.5,107.6 144.0,107.6 144.5,107.6 145.0,107.6 145.5,107.6 146.0,107.6 146.5,107.6 147.0,107.6 147.5,107.6 148.0,107.6 148.5,107.6 149.0,107.6 149.5,107.6 150.0,107.6 150.5,107.6 151.0,107.6 151.5,107.6 152.0,107.6 152.5,107.6 153.0,107.6 153.5,107.6 154.0,107.6 154.5,107.6 155.0,105.7 155.5,103.3 156.0,100.9 156.5,98.4 157.0,95.7 157.5,93.1 158.0,94.8 158.5,99.3 159.0,103.8 159.5,107.6 160.0,103.3 160.5,101.4 161.0,102.8 161.5,104.3 162.0,106.0 162.5,107.6 163.0,107.6 163.5,107.6 164.0,107.6 164.5,107.6 165.0,107.6 165.5,107.6 166.0,107.6 166.5,107.6 167.0,107.6 167.5,107.6 168.0,107.6 168.5,107.6 169.0,107.6 169.5,96.5 170.0,85.4 170.5,82.6 171.0,85.2 171.5,87.9 172.0,90.5 172.5,89.3 173.0,88.2 173.5,87.0 174.0,87.7 174.5,91.1 175.0,94.6 175.5,98.5 176.0,102.6 176.5,106.8 177.0,107.6 177.5,107.6 178.0,107.6 178.5,107.6 179.0,107.6 179.5,107.6 180.0,107.6 180.5,107.6 181.0,107.6 181.5,107.6 182.0,107.6 182.5,107.6 183.0,107.6 183.5,107.6 184.0,107.6 184.5,107.6 185.0,107.6 185.5,107.6 186.0,107.6 186.5,107.6 187.0,107.6 187.5,107.6 188.0,107.6 188.5,107.6 189.0,107.6 189.5,107.6 190.0,107.6 190.5,107.6 191.0,107.6 191.5,107.6 192.0,107.6 192.5,107.6 193.0,107.6 193.5,107.6 194.0,107.6 194.5,107.6 195.0,113.6 195.5,119.3 196.0,124.8 196.5,118.7 197.0,114.8 197.5,114.2 198.0,113.6 198.5,114.1 199.0,114.5 199.5,112.6 200.0,110.0 200.5,108.0 201.0,107.6 201.5,107.6 202.0,107.6 202.5,107.6 203.0,107.6 203.5,107.6 204.0,107.6 204.5,107.6 205.0,107.6 205.5,107.6 206.0,107.6 206.5,107.6 207.0,107.6 207.5,112.2 208.0,122.9 208.5,132.6 209.0,127.3 209.5,122.6 210.0,120.6 210.5,121.4 211.0,124.0 211.5,126.9 212.0,130.0 212.5,126.5 213.0,123.0 213.5,120.7 214.0,118.5 214.5,116.4 215.0,114.4 215.5,112.4 216.0,110.2 216.5,108.0 217.0,107.6 217.5,107.6 218.0,107.6 218.5,107.6 219.0,107.6 219.5,107.6 220.0,107.6 220.5,107.6 221.0,107.6 221.5,107.6 222.0,107.6 222.5,107.6 223.0,107.6 223.5,107.6 224.0,107.6 224.5,107.6 225.0,107.6 225.5,107.6 226.0,107.6 226.5,107.6 227.0,107.6 227.5,107.6 228.0,107.6 228.5,107.6 229.0,107.6 229.5,107.6 230.0,107.6 230.5,107.6 231.0,107.6 231.5,107.1 232.0,104.8 232.5,102.4 233.0,100.0 233.5,97.3 234.0,94.7 234.5,92.0 235.0,96.6 235.5,101.2 236.0,105.3 236.5,105.9 237.0,101.6 237.5,102.0 238.0,103.4 238.5,105.0 239.0,106.6 239.5,107.6 240.0,107.6 240.5,107.6 241.0,107.6 241.5,107.6 242.0,107.6 242.5,107.6 243.0,107.6 243.5,107.6 244.0,107.6 244.5,107.6 245.0,107.6 245.5,107.6 246.0,103.2 246.5,92.1 247.0,81.0 247.5,83.6 248.0,86.3 248.5,88.9 249.0,90.0 249.5,88.9 250.0,87.7 250.5,86.5 251.0,89.1 251.5,92.5 252.0,96.0 252.5,100.1 253.0,104.3 253.5,107.6 254.0,107.6 254.5,107.6 255.0,107.6 255.5,107.6 256.0,107.6 256.5,107.6 257.0,107.6 257.5,107.6 258.0,107.6 258.5,107.6 259.0,107.6 259.5,107.6 260.0,107.6 260.5,107.6 261.0,107.6 261.5,107.6 262.0,107.6 262.5,107.6 263.0,107.6 263.5,107.6 264.0,107.6 264.5,107.6 265.0,107.6 265.5,107.6 266.0,107.6 266.5,107.6 267.0,107.6 267.5,107.6 268.0,107.6 268.5,107.6 269.0,107.6 269.5,107.6 270.0,107.6 270.5,107.6 271.0,107.6 271.5,110.0 272.0,116.0 272.5,121.5 273.0,122.3 273.5,116.2 274.0,114.5 274.5,114.0 275.0,113.8 275.5,114.2 276.0,114.1 276.5,111.5 277.0,109.2 277.5,107.6 278.0,107.6 278.5,107.6 279.0,107.6 279.5,107.6 280.0,107.6 280.5,107.6 281.0,107.6 281.5,107.6 282.0,107.6 282.5,107.6 283.0,107.6 283.5,107.6 284.0,107.6 284.5,116.7 285.0,126.8 285.5,130.5 286.0,125.1 286.5,121.8 287.0,119.8 287.5,122.4 288.0,125.0 288.5,128.1 289.0,128.6 289.5,125.1 290.0,122.1 290.5,119.8 291.0,117.6 291.5,115.6 292.0,113.6 292.5,111.6 293.0,109.4 293.5,107.6 294.0,107.6 294.5,107.6 295.0,107.6 295.5,107.6 296.0,107.6 296.5,107.6 297.0,107.6 297.5,107.6 298.0,107.6 298.5,107.6 299.0,107.6 299.5,107.6 300.0,107.6 300.5,107.6 301.0,107.6 301.5,107.6 302.0,107.6 302.5,107.6 303.0,107.6 303.5,107.6 304.0,107.6 304.5,107.6 305.0,107.6 305.5,107.6 306.0,107.6 306.5,107.6 307.0,107.6 307.5,107.6 308.0,107.6 308.5,106.2 309.0,103.8 309.5,101.4 310.0,98.9 310.5,96.3 311.0,93.6 311.5,93.8 312.0,98.4 312.5,103.0 313.0,106.8 313.5,104.2 314.0,101.1 314.5,102.5 315.0,104.0 315.5,105.6 316.0,107.3 316.5,107.6 317.0,107.6 317.5,107.6 318.0,107.6 318.5,107.6 319.0,107.6 319.5,107.6 320.0,107.6 320.5,107.6 321.0,107.6 321.5,107.6 322.0,107.6 322.5,107.6 323.0,98.7 323.5,87.6 324.0,82.1 324.5,84.7 325.0,87.3 325.5,90.0 326.0,89.6 326.5,88.4 327.0,87.2 327.5,87.0 328.0,90.5 328.5,93.9 329.0,97.7 329.5,101.8 330.0,105.9 330.5,107.6 331.0,107.6 331.5,107.6 332.0,107.6 332.5,107.6 333.0,107.6 333.5,107.6 334.0,107.6 334.5,107.6 335.0,107.6 335.5,107.6 336.0,107.6 336.5,107.6 337.0,107.6 337.5,107.6 338.0,107.6 338.5,107.6 339.0,107.6 339.5,107.6 340.0,107.6 340.5,107.6 341.0,107.6 341.5,107.6 342.0,107.6 342.5,107.6 343.0,107.6 343.5,107.6 344.0,107.6 344.5,107.6 345.0,107.6 345.5,107.6 346.0,107.6 346.5,107.6 347.0,107.6 347.5,107.6 348.0,107.6 348.5,112.4 349.0,118.2 349.5,123.7 350.0,119.9 350.5,114.9 351.0,114.3 351.5,113.7 352.0,114.0 352.5,114.4 353.0,113.1 353.5,110.5 354.0,108.4 354.5,107.6 355.0,107.6 355.5,107.6 356.0,107.6 356.5,107.6 357.0,107.6 357.5,107.6 358.0,107.6 358.5,107.6 359.0,107.6 359.5,107.6 360.0,107.6 360.5,107.6 361.0,109.9 361.5,120.9 362.0,130.7 362.5,128.3 363.0,123.0 363.5,121.0 364.0,120.8 364.5,123.4 365.0,126.3 365.5,129.4 366.0,127.2 366.5,123.7 367.0,121.2 367.5,118.9 368.0,116.8 368.5,114.8 369.0,112.8 369.5,110.7 370.0,108.5 370.5,107.6 371.0,107.6 371.5,107.6 372.0,107.6 372.5,107.6 373.0,107.6 373.5,107.6 374.0,107.6 374.5,107.6 375.0,107.6 375.5,107.6 376.0,107.6 376.5,107.6 377.0,107.6 377.5,107.6 378.0,107.6 378.5,107.6 379.0,107.6 379.5,107.6 380.0,107.6 380.5,107.6 381.0,107.6 381.5,107.6 382.0,107.6 382.5,107.6 383.0,107.6 383.5,107.6 384.0,107.6 384.5,107.6 385.0,107.6 385.5,105.2 386.0,102.8 386.5,100.5 387.0,97.9 387.5,95.2 388.0,92.5 388.5,95.7 389.0,100.3 389.5,104.5 390.0,106.7 390.5,102.5 391.0,101.7 391.5,103.1 392.0,104.7 392.5,106.3 393.0,107.6 393.5,107.6 394.0,107.6 394.5,107.6 395.0,107.6 395.5,107.6 396.0,107.6 396.5,107.6 397.0,107.6 397.5,107.6 398.0,107.6 398.5,107.6 399.0,107.6 399.5,105.4 400.0,94.3 400.5,83.2 401.0,83.1 401.5,85.8 402.0,88.4 402.5,90.3 403.0,89.1 403.5,87.9 404.0,86.8 404.5,88.4 405.0,91.8 405.5,95.3 406.0,99.3 406.5,103.5 407.0,107.6 407.5,107.6 408.0,107.6 408.5,107.6 409.0,107.6 409.5,107.6 410.0,107.6 410.5,107.6 411.0,107.6 411.5,107.6 412.0,107.6 412.5,107.6 413.0,107.6 413.5,107.6 414.0,107.6 414.5,107.6 415.0,107.6 415.5,107.6 416.0,107.6 416.5,107.6 417.0,107.6 417.5,107.6 418.0,107.6 418.5,107.6 419.0,107.6 419.5,107.6 420.0,107.6 420.5,107.6 421.0,107.6 421.5,107.6 422.0,107.6 422.5,107.6 423.0,107.6 423.5,107.6 424.0,107.6 424.5,107.6 425.0,108.8 425.5,114.8 426.0,120.4 426.5,123.6 427.0,117.4 427.5,114.6 428.0,114.1 428.5,113.7 429.0,114.1 429.5,114.6 430.0,112.0 430.5,109.6 431.0,107.6 431.5,107.6 432.0,107.6 432.5,107.6 433.0,107.6 433.5,107.6 434.0,107.6 434.5,107.6 435.0,107.6 435.5,107.6 436.0,107.6 436.5,107.6 437.0,107.6 437.5,107.6 438.0,114.4 438.5,124.8 439.0,131.5 439.5,126.2 440.0,122.2 440.5,120.2 441.0,121.9 441.5,124.5 442.0,127.5 442.5,129.3 443.0,125.8 443.5,122.5 444.0,120.3 444.5,118.0 445.0,116.0 445.5,114.0 446.0,112.0 446.5,109.8 447.0,107.6 447.5,107.6 448.0,107.6 448.5,107.6 449.0,107.6 449.5,107.6 450.0,107.6 450.5,107.6 451.0,107.6 451.5,107.6 452.0,107.6 452.5,107.6 453.0,107.6 453.5,107.6 454.0,107.6 454.5,107.6 455.0,107.6 455.5,107.6 456.0,107.6 456.5,107.6 457.0,107.6 457.5,107.6 458.0,107.6 458.5,107.6 459.0,107.6 459.5,107.6 460.0,107.6" fill="none" stroke="#fff" stroke-width="2.4" stroke-linejoin="miter" shape-rendering="crispEdges"/><polyline transform="translate(0,0.75)" points="0.0,107.6 0.5,107.6 1.0,107.6 1.5,105.2 2.0,102.9 2.5,100.5 3.0,97.9 3.5,95.2 4.0,92.5 4.5,95.7 5.0,100.2 5.5,104.5 6.0,106.8 6.5,102.5 7.0,101.7 7.5,103.1 8.0,104.7 8.5,106.3 9.0,107.6 9.5,107.6 10.0,107.6 10.5,107.6 11.0,107.6 11.5,107.6 12.0,107.6 12.5,107.6 13.0,107.6 13.5,107.6 14.0,107.6 14.5,107.6 15.0,107.6 15.5,105.4 16.0,94.3 16.5,83.2 17.0,83.1 17.5,85.8 18.0,88.4 18.5,90.3 19.0,89.1 19.5,87.9 20.0,86.8 20.5,88.4 21.0,91.8 21.5,95.3 22.0,99.3 22.5,103.5 23.0,107.6 23.5,107.6 24.0,107.6 24.5,107.6 25.0,107.6 25.5,107.6 26.0,107.6 26.5,107.6 27.0,107.6 27.5,107.6 28.0,107.6 28.5,107.6 29.0,107.6 29.5,107.6 30.0,107.6 30.5,107.6 31.0,107.6 31.5,107.6 32.0,107.6 32.5,107.6 33.0,107.6 33.5,107.6 34.0,107.6 34.5,107.6 35.0,107.6 35.5,107.6 36.0,107.6 36.5,107.6 37.0,107.6 37.5,107.6 38.0,107.6 38.5,107.6 39.0,107.6 39.5,107.6 40.0,107.6 40.5,107.6 41.0,108.8 41.5,114.8 42.0,120.4 42.5,123.6 43.0,117.5 43.5,114.6 44.0,114.1 44.5,113.7 45.0,114.1 45.5,114.6 46.0,112.0 46.5,109.6 47.0,107.6 47.5,107.6 48.0,107.6 48.5,107.6 49.0,107.6 49.5,107.6 50.0,107.6 50.5,107.6 51.0,107.6 51.5,107.6 52.0,107.6 52.5,107.6 53.0,107.6 53.5,107.6 54.0,114.4 54.5,124.8 55.0,131.5 55.5,126.2 56.0,122.2 56.5,120.2 57.0,121.9 57.5,124.5 58.0,127.5 58.5,129.3 59.0,125.8 59.5,122.5 60.0,120.3 60.5,118.0 61.0,116.0 61.5,114.0 62.0,112.0 62.5,109.8 63.0,107.6 63.5,107.6 64.0,107.6 64.5,107.6 65.0,107.6 65.5,107.6 66.0,107.6 66.5,107.6 67.0,107.6 67.5,107.6 68.0,107.6 68.5,107.6 69.0,107.6 69.5,107.6 70.0,107.6 70.5,107.6 71.0,107.6 71.5,107.6 72.0,107.6 72.5,107.6 73.0,107.6 73.5,107.6 74.0,107.6 74.5,107.6 75.0,107.6 75.5,107.6 76.0,107.6 76.5,107.6 77.0,107.6 77.5,107.6 78.0,106.6 78.5,104.3 79.0,101.9 79.5,99.5 80.0,96.8 80.5,94.1 81.0,92.9 81.5,97.5 82.0,102.1 82.5,106.1 83.0,105.0 83.5,100.8 84.0,102.3 84.5,103.7 85.0,105.3 85.5,106.9 86.0,107.6 86.5,107.6 87.0,107.6 87.5,107.6 88.0,107.6 88.5,107.6 89.0,107.6 89.5,107.6 90.0,107.6 90.5,107.6 91.0,107.6 91.5,107.6 92.0,107.6 92.5,100.9 93.0,89.9 93.5,81.5 94.0,84.2 94.5,86.8 95.0,89.4 95.5,89.8 96.0,88.6 96.5,87.5 97.0,86.3 97.5,89.8 98.0,93.2 98.5,96.8 99.0,101.0 99.5,105.1 100.0,107.6 100.5,107.6 101.0,107.6 101.5,107.6 102.0,107.6 102.5,107.6 103.0,107.6 103.5,107.6 104.0,107.6 104.5,107.6 105.0,107.6 105.5,107.6 106.0,107.6 106.5,107.6 107.0,107.6 107.5,107.6 108.0,107.6 108.5,107.6 109.0,107.6 109.5,107.6 110.0,107.6 110.5,107.6 111.0,107.6 111.5,107.6 112.0,107.6 112.5,107.6 113.0,107.6 113.5,107.6 114.0,107.6 114.5,107.6 115.0,107.6 115.5,107.6 116.0,107.6 116.5,107.6 117.0,107.6 117.5,107.6 118.0,111.2 118.5,117.1 119.0,122.6 119.5,121.1 120.0,115.0 120.5,114.4 121.0,113.8 121.5,113.9 122.0,114.3 122.5,113.6 123.0,111.0 123.5,108.8 124.0,107.6 124.5,107.6 125.0,107.6 125.5,107.6 126.0,107.6 126.5,107.6 127.0,107.6 127.5,107.6 128.0,107.6 128.5,107.6 129.0,107.6 129.5,107.6 130.0,107.6 130.5,107.6 131.0,119.0 131.5,128.7 132.0,129.4 132.5,124.1 133.0,121.4 133.5,120.3 134.0,122.9 134.5,125.6 135.0,128.8 135.5,127.9 136.0,124.4 136.5,121.6 137.0,119.4 137.5,117.2 138.0,115.2 138.5,113.2 139.0,111.1 139.5,108.9 140.0,107.6 140.5,107.6 141.0,107.6 141.5,107.6 142.0,107.6 142.5,107.6 143.0,107.6 143.5,107.6 144.0,107.6 144.5,107.6 145.0,107.6 145.5,107.6 146.0,107.6 146.5,107.6 147.0,107.6 147.5,107.6 148.0,107.6 148.5,107.6 149.0,107.6 149.5,107.6 150.0,107.6 150.5,107.6 151.0,107.6 151.5,107.6 152.0,107.6 152.5,107.6 153.0,107.6 153.5,107.6 154.0,107.6 154.5,107.6 155.0,105.7 155.5,103.3 156.0,100.9 156.5,98.4 157.0,95.7 157.5,93.1 158.0,94.8 158.5,99.3 159.0,103.8 159.5,107.6 160.0,103.3 160.5,101.4 161.0,102.8 161.5,104.3 162.0,106.0 162.5,107.6 163.0,107.6 163.5,107.6 164.0,107.6 164.5,107.6 165.0,107.6 165.5,107.6 166.0,107.6 166.5,107.6 167.0,107.6 167.5,107.6 168.0,107.6 168.5,107.6 169.0,107.6 169.5,96.5 170.0,85.4 170.5,82.6 171.0,85.2 171.5,87.9 172.0,90.5 172.5,89.3 173.0,88.2 173.5,87.0 174.0,87.7 174.5,91.1 175.0,94.6 175.5,98.5 176.0,102.6 176.5,106.8 177.0,107.6 177.5,107.6 178.0,107.6 178.5,107.6 179.0,107.6 179.5,107.6 180.0,107.6 180.5,107.6 181.0,107.6 181.5,107.6 182.0,107.6 182.5,107.6 183.0,107.6 183.5,107.6 184.0,107.6 184.5,107.6 185.0,107.6 185.5,107.6 186.0,107.6 186.5,107.6 187.0,107.6 187.5,107.6 188.0,107.6 188.5,107.6 189.0,107.6 189.5,107.6 190.0,107.6 190.5,107.6 191.0,107.6 191.5,107.6 192.0,107.6 192.5,107.6 193.0,107.6 193.5,107.6 194.0,107.6 194.5,107.6 195.0,113.6 195.5,119.3 196.0,124.8 196.5,118.7 197.0,114.8 197.5,114.2 198.0,113.6 198.5,114.1 199.0,114.5 199.5,112.6 200.0,110.0 200.5,108.0 201.0,107.6 201.5,107.6 202.0,107.6 202.5,107.6 203.0,107.6 203.5,107.6 204.0,107.6 204.5,107.6 205.0,107.6 205.5,107.6 206.0,107.6 206.5,107.6 207.0,107.6 207.5,112.2 208.0,122.9 208.5,132.6 209.0,127.3 209.5,122.6 210.0,120.6 210.5,121.4 211.0,124.0 211.5,126.9 212.0,130.0 212.5,126.5 213.0,123.0 213.5,120.7 214.0,118.5 214.5,116.4 215.0,114.4 215.5,112.4 216.0,110.2 216.5,108.0 217.0,107.6 217.5,107.6 218.0,107.6 218.5,107.6 219.0,107.6 219.5,107.6 220.0,107.6 220.5,107.6 221.0,107.6 221.5,107.6 222.0,107.6 222.5,107.6 223.0,107.6 223.5,107.6 224.0,107.6 224.5,107.6 225.0,107.6 225.5,107.6 226.0,107.6 226.5,107.6 227.0,107.6 227.5,107.6 228.0,107.6 228.5,107.6 229.0,107.6 229.5,107.6 230.0,107.6 230.5,107.6 231.0,107.6 231.5,107.1 232.0,104.8 232.5,102.4 233.0,100.0 233.5,97.3 234.0,94.7 234.5,92.0 235.0,96.6 235.5,101.2 236.0,105.3 236.5,105.9 237.0,101.6 237.5,102.0 238.0,103.4 238.5,105.0 239.0,106.6 239.5,107.6 240.0,107.6 240.5,107.6 241.0,107.6 241.5,107.6 242.0,107.6 242.5,107.6 243.0,107.6 243.5,107.6 244.0,107.6 244.5,107.6 245.0,107.6 245.5,107.6 246.0,103.2 246.5,92.1 247.0,81.0 247.5,83.6 248.0,86.3 248.5,88.9 249.0,90.0 249.5,88.9 250.0,87.7 250.5,86.5 251.0,89.1 251.5,92.5 252.0,96.0 252.5,100.1 253.0,104.3 253.5,107.6 254.0,107.6 254.5,107.6 255.0,107.6 255.5,107.6 256.0,107.6 256.5,107.6 257.0,107.6 257.5,107.6 258.0,107.6 258.5,107.6 259.0,107.6 259.5,107.6 260.0,107.6 260.5,107.6 261.0,107.6 261.5,107.6 262.0,107.6 262.5,107.6 263.0,107.6 263.5,107.6 264.0,107.6 264.5,107.6 265.0,107.6 265.5,107.6 266.0,107.6 266.5,107.6 267.0,107.6 267.5,107.6 268.0,107.6 268.5,107.6 269.0,107.6 269.5,107.6 270.0,107.6 270.5,107.6 271.0,107.6 271.5,110.0 272.0,116.0 272.5,121.5 273.0,122.3 273.5,116.2 274.0,114.5 274.5,114.0 275.0,113.8 275.5,114.2 276.0,114.1 276.5,111.5 277.0,109.2 277.5,107.6 278.0,107.6 278.5,107.6 279.0,107.6 279.5,107.6 280.0,107.6 280.5,107.6 281.0,107.6 281.5,107.6 282.0,107.6 282.5,107.6 283.0,107.6 283.5,107.6 284.0,107.6 284.5,116.7 285.0,126.8 285.5,130.5 286.0,125.1 286.5,121.8 287.0,119.8 287.5,122.4 288.0,125.0 288.5,128.1 289.0,128.6 289.5,125.1 290.0,122.1 290.5,119.8 291.0,117.6 291.5,115.6 292.0,113.6 292.5,111.6 293.0,109.4 293.5,107.6 294.0,107.6 294.5,107.6 295.0,107.6 295.5,107.6 296.0,107.6 296.5,107.6 297.0,107.6 297.5,107.6 298.0,107.6 298.5,107.6 299.0,107.6 299.5,107.6 300.0,107.6 300.5,107.6 301.0,107.6 301.5,107.6 302.0,107.6 302.5,107.6 303.0,107.6 303.5,107.6 304.0,107.6 304.5,107.6 305.0,107.6 305.5,107.6 306.0,107.6 306.5,107.6 307.0,107.6 307.5,107.6 308.0,107.6 308.5,106.2 309.0,103.8 309.5,101.4 310.0,98.9 310.5,96.3 311.0,93.6 311.5,93.8 312.0,98.4 312.5,103.0 313.0,106.8 313.5,104.2 314.0,101.1 314.5,102.5 315.0,104.0 315.5,105.6 316.0,107.3 316.5,107.6 317.0,107.6 317.5,107.6 318.0,107.6 318.5,107.6 319.0,107.6 319.5,107.6 320.0,107.6 320.5,107.6 321.0,107.6 321.5,107.6 322.0,107.6 322.5,107.6 323.0,98.7 323.5,87.6 324.0,82.1 324.5,84.7 325.0,87.3 325.5,90.0 326.0,89.6 326.5,88.4 327.0,87.2 327.5,87.0 328.0,90.5 328.5,93.9 329.0,97.7 329.5,101.8 330.0,105.9 330.5,107.6 331.0,107.6 331.5,107.6 332.0,107.6 332.5,107.6 333.0,107.6 333.5,107.6 334.0,107.6 334.5,107.6 335.0,107.6 335.5,107.6 336.0,107.6 336.5,107.6 337.0,107.6 337.5,107.6 338.0,107.6 338.5,107.6 339.0,107.6 339.5,107.6 340.0,107.6 340.5,107.6 341.0,107.6 341.5,107.6 342.0,107.6 342.5,107.6 343.0,107.6 343.5,107.6 344.0,107.6 344.5,107.6 345.0,107.6 345.5,107.6 346.0,107.6 346.5,107.6 347.0,107.6 347.5,107.6 348.0,107.6 348.5,112.4 349.0,118.2 349.5,123.7 350.0,119.9 350.5,114.9 351.0,114.3 351.5,113.7 352.0,114.0 352.5,114.4 353.0,113.1 353.5,110.5 354.0,108.4 354.5,107.6 355.0,107.6 355.5,107.6 356.0,107.6 356.5,107.6 357.0,107.6 357.5,107.6 358.0,107.6 358.5,107.6 359.0,107.6 359.5,107.6 360.0,107.6 360.5,107.6 361.0,109.9 361.5,120.9 362.0,130.7 362.5,128.3 363.0,123.0 363.5,121.0 364.0,120.8 364.5,123.4 365.0,126.3 365.5,129.4 366.0,127.2 366.5,123.7 367.0,121.2 367.5,118.9 368.0,116.8 368.5,114.8 369.0,112.8 369.5,110.7 370.0,108.5 370.5,107.6 371.0,107.6 371.5,107.6 372.0,107.6 372.5,107.6 373.0,107.6 373.5,107.6 374.0,107.6 374.5,107.6 375.0,107.6 375.5,107.6 376.0,107.6 376.5,107.6 377.0,107.6 377.5,107.6 378.0,107.6 378.5,107.6 379.0,107.6 379.5,107.6 380.0,107.6 380.5,107.6 381.0,107.6 381.5,107.6 382.0,107.6 382.5,107.6 383.0,107.6 383.5,107.6 384.0,107.6 384.5,107.6 385.0,107.6 385.5,105.2 386.0,102.8 386.5,100.5 387.0,97.9 387.5,95.2 388.0,92.5 388.5,95.7 389.0,100.3 389.5,104.5 390.0,106.7 390.5,102.5 391.0,101.7 391.5,103.1 392.0,104.7 392.5,106.3 393.0,107.6 393.5,107.6 394.0,107.6 394.5,107.6 395.0,107.6 395.5,107.6 396.0,107.6 396.5,107.6 397.0,107.6 397.5,107.6 398.0,107.6 398.5,107.6 399.0,107.6 399.5,105.4 400.0,94.3 400.5,83.2 401.0,83.1 401.5,85.8 402.0,88.4 402.5,90.3 403.0,89.1 403.5,87.9 404.0,86.8 404.5,88.4 405.0,91.8 405.5,95.3 406.0,99.3 406.5,103.5 407.0,107.6 407.5,107.6 408.0,107.6 408.5,107.6 409.0,107.6 409.5,107.6 410.0,107.6 410.5,107.6 411.0,107.6 411.5,107.6 412.0,107.6 412.5,107.6 413.0,107.6 413.5,107.6 414.0,107.6 414.5,107.6 415.0,107.6 415.5,107.6 416.0,107.6 416.5,107.6 417.0,107.6 417.5,107.6 418.0,107.6 418.5,107.6 419.0,107.6 419.5,107.6 420.0,107.6 420.5,107.6 421.0,107.6 421.5,107.6 422.0,107.6 422.5,107.6 423.0,107.6 423.5,107.6 424.0,107.6 424.5,107.6 425.0,108.8 425.5,114.8 426.0,120.4 426.5,123.6 427.0,117.4 427.5,114.6 428.0,114.1 428.5,113.7 429.0,114.1 429.5,114.6 430.0,112.0 430.5,109.6 431.0,107.6 431.5,107.6 432.0,107.6 432.5,107.6 433.0,107.6 433.5,107.6 434.0,107.6 434.5,107.6 435.0,107.6 435.5,107.6 436.0,107.6 436.5,107.6 437.0,107.6 437.5,107.6 438.0,114.4 438.5,124.8 439.0,131.5 439.5,126.2 440.0,122.2 440.5,120.2 441.0,121.9 441.5,124.5 442.0,127.5 442.5,129.3 443.0,125.8 443.5,122.5 444.0,120.3 444.5,118.0 445.0,116.0 445.5,114.0 446.0,112.0 446.5,109.8 447.0,107.6 447.5,107.6 448.0,107.6 448.5,107.6 449.0,107.6 449.5,107.6 450.0,107.6 450.5,107.6 451.0,107.6 451.5,107.6 452.0,107.6 452.5,107.6 453.0,107.6 453.5,107.6 454.0,107.6 454.5,107.6 455.0,107.6 455.5,107.6 456.0,107.6 456.5,107.6 457.0,107.6 457.5,107.6 458.0,107.6 458.5,107.6 459.0,107.6 459.5,107.6 460.0,107.6" fill="none" stroke="#fff" stroke-width="2.4" stroke-linejoin="miter" shape-rendering="crispEdges"/><polyline transform="translate(0,-0.8)" points="0.0,95.2 0.5,95.1 1.0,95.8 1.5,96.5 2.0,97.2 2.5,97.9 3.0,98.6 3.5,99.3 4.0,100.0 4.5,100.8 5.0,100.1 5.5,99.4 6.0,98.7 6.5,98.0 7.0,97.3 7.5,96.6 8.0,95.9 8.5,95.2 9.0,95.1 9.5,95.8 10.0,96.5 10.5,97.2 11.0,97.9 11.5,98.6 12.0,99.3 12.5,100.0 13.0,100.7 13.5,100.2 14.0,99.5 14.5,98.8 15.0,98.1 15.5,97.4 16.0,96.7 16.5,96.0 17.0,95.3 17.5,95.0 18.0,95.7 18.5,96.4 19.0,97.1 19.5,97.8 20.0,98.5 20.5,99.3 21.0,100.0 21.5,100.7 22.0,100.2 22.5,99.5 23.0,98.8 23.5,98.1 24.0,97.4 24.5,96.7 25.0,96.0 25.5,95.3 26.0,95.0 26.5,95.7 27.0,96.4 27.5,97.1 28.0,97.8 28.5,98.5 29.0,99.2 29.5,99.9 30.0,100.6 30.5,100.3 31.0,99.6 31.5,98.9 32.0,98.2 32.5,97.5 33.0,96.8 33.5,96.1 34.0,95.4 34.5,94.9 35.0,95.6 35.5,96.3 36.0,97.0 36.5,97.8 37.0,98.5 37.5,99.2 38.0,99.9 38.5,100.6 39.0,100.3 39.5,99.6 40.0,98.9 40.5,98.2 41.0,97.5 41.5,96.8 42.0,96.1 42.5,95.4 43.0,94.9 43.5,95.6 44.0,96.3 44.5,97.0 45.0,97.7 45.5,98.4 46.0,99.1 46.5,99.8 47.0,100.5 47.5,100.4 48.0,99.7 48.5,99.0 49.0,98.3 49.5,97.6 50.0,96.9 50.5,96.2 51.0,95.5 51.5,94.8 52.0,95.5 52.5,96.3 53.0,97.0 53.5,97.7 54.0,98.4 54.5,99.1 55.0,99.8 55.5,100.5 56.0,100.4 56.5,99.7 57.0,99.0 57.5,98.3 58.0,97.6 58.5,96.9 59.0,96.2 59.5,95.5 60.0,94.8 60.5,95.5 61.0,96.2 61.5,96.9 62.0,97.6 62.5,98.3 63.0,99.0 63.5,99.7 64.0,100.4 64.5,100.5 65.0,99.8 65.5,99.1 66.0,98.4 66.5,97.7 67.0,97.0 67.5,96.3 68.0,95.5 68.5,94.8 69.0,95.5 69.5,96.2 70.0,96.9 70.5,97.6 71.0,98.3 71.5,99.0 72.0,99.7 72.5,100.4 73.0,100.5 73.5,99.8 74.0,99.1 74.5,98.4 75.0,97.7 75.5,97.0 76.0,96.3 76.5,95.6 77.0,94.9 77.5,95.4 78.0,96.1 78.5,96.8 79.0,97.5 79.5,98.2 80.0,98.9 80.5,99.6 81.0,100.3 81.5,100.6 82.0,99.9 82.5,99.2 83.0,98.5 83.5,97.8 84.0,97.0 84.5,96.3 85.0,95.6 85.5,94.9 86.0,95.4 86.5,96.1 87.0,96.8 87.5,97.5 88.0,98.2 88.5,98.9 89.0,99.6 89.5,100.3 90.0,100.6 90.5,99.9 91.0,99.2 91.5,98.5 92.0,97.8 92.5,97.1 93.0,96.4 93.5,95.7 94.0,95.0 94.5,95.3 95.0,96.0 95.5,96.7 96.0,97.4 96.5,98.1 97.0,98.8 97.5,99.5 98.0,100.2 98.5,100.7 99.0,100.0 99.5,99.3 100.0,98.5 100.5,97.8 101.0,97.1 101.5,96.4 102.0,95.7 102.5,95.0 103.0,95.3 103.5,96.0 104.0,96.7 104.5,97.4 105.0,98.1 105.5,98.8 106.0,99.5 106.5,100.2 107.0,100.7 107.5,100.0 108.0,99.3 108.5,98.6 109.0,97.9 109.5,97.2 110.0,96.5 110.5,95.8 111.0,95.1 111.5,95.2 112.0,95.9 112.5,96.6 113.0,97.3 113.5,98.0 114.0,98.7 114.5,99.4 115.0,100.1 115.5,100.8 116.0,100.0 116.5,99.3 117.0,98.6 117.5,97.9 118.0,97.2 118.5,96.5 119.0,95.8 119.5,95.1 120.0,95.2 120.5,95.9 121.0,96.6 121.5,97.3 122.0,98.0 122.5,98.7 123.0,99.4 123.5,100.1 124.0,100.8 124.5,100.1 125.0,99.4 125.5,98.7 126.0,98.0 126.5,97.3 127.0,96.6 127.5,95.9 128.0,95.2 128.5,95.1 129.0,95.8 129.5,96.5 130.0,97.2 130.5,97.9 131.0,98.6 131.5,99.3 132.0,100.0 132.5,100.8 133.0,100.1 133.5,99.4 134.0,98.7 134.5,98.0 135.0,97.3 135.5,96.6 136.0,95.9 136.5,95.2 137.0,95.1 137.5,95.8 138.0,96.5 138.5,97.2 139.0,97.9 139.5,98.6 140.0,99.3 140.5,100.0 141.0,100.7 141.5,100.2 142.0,99.5 142.5,98.8 143.0,98.1 143.5,97.4 144.0,96.7 144.5,96.0 145.0,95.3 145.5,95.0 146.0,95.7 146.5,96.4 147.0,97.1 147.5,97.8 148.0,98.5 148.5,99.3 149.0,100.0 149.5,100.7 150.0,100.2 150.5,99.5 151.0,98.8 151.5,98.1 152.0,97.4 152.5,96.7 153.0,96.0 153.5,95.3 154.0,95.0 154.5,95.7 155.0,96.4 155.5,97.1 156.0,97.8 156.5,98.5 157.0,99.2 157.5,99.9 158.0,100.6 158.5,100.3 159.0,99.6 159.5,98.9 160.0,98.2 160.5,97.5 161.0,96.8 161.5,96.1 162.0,95.4 162.5,94.9 163.0,95.6 163.5,96.3 164.0,97.0 164.5,97.8 165.0,98.5 165.5,99.2 166.0,99.9 166.5,100.6 167.0,100.3 167.5,99.6 168.0,98.9 168.5,98.2 169.0,97.5 169.5,96.8 170.0,96.1 170.5,95.4 171.0,94.9 171.5,95.6 172.0,96.3 172.5,97.0 173.0,97.7 173.5,98.4 174.0,99.1 174.5,99.8 175.0,100.5 175.5,100.4 176.0,99.7 176.5,99.0 177.0,98.3 177.5,97.6 178.0,96.9 178.5,96.2 179.0,95.5 179.5,94.8 180.0,95.5 180.5,96.3 181.0,97.0 181.5,97.7 182.0,98.4 182.5,99.1 183.0,99.8 183.5,100.5 184.0,100.4 184.5,99.7 185.0,99.0 185.5,98.3 186.0,97.6 186.5,96.9 187.0,96.2 187.5,95.5 188.0,94.8 188.5,95.5 189.0,96.2 189.5,96.9 190.0,97.6 190.5,98.3 191.0,99.0 191.5,99.7 192.0,100.4 192.5,100.5 193.0,99.8 193.5,99.1 194.0,98.4 194.5,97.7 195.0,97.0 195.5,96.3 196.0,95.5 196.5,94.8 197.0,95.5 197.5,96.2 198.0,96.9 198.5,97.6 199.0,98.3 199.5,99.0 200.0,99.7 200.5,100.4 201.0,100.5 201.5,99.8 202.0,99.1 202.5,98.4 203.0,97.7 203.5,97.0 204.0,96.3 204.5,95.6 205.0,94.9 205.5,95.4 206.0,96.1 206.5,96.8 207.0,97.5 207.5,98.2 208.0,98.9 208.5,99.6 209.0,100.3 209.5,100.6 210.0,99.9 210.5,99.2 211.0,98.5 211.5,97.8 212.0,97.0 212.5,96.3 213.0,95.6 213.5,94.9 214.0,95.4 214.5,96.1 215.0,96.8 215.5,97.5 216.0,98.2 216.5,98.9 217.0,99.6 217.5,100.3 218.0,100.6 218.5,99.9 219.0,99.2 219.5,98.5 220.0,97.8 220.5,97.1 221.0,96.4 221.5,95.7 222.0,95.0 222.5,95.3 223.0,96.0 223.5,96.7 224.0,97.4 224.5,98.1 225.0,98.8 225.5,99.5 226.0,100.2 226.5,100.7 227.0,100.0 227.5,99.3 228.0,98.5 228.5,97.8 229.0,97.1 229.5,96.4 230.0,95.7 230.5,95.0 231.0,95.3 231.5,96.0 232.0,96.7 232.5,97.4 233.0,98.1 233.5,98.8 234.0,99.5 234.5,100.2 235.0,100.7 235.5,100.0 236.0,99.3 236.5,98.6 237.0,97.9 237.5,97.2 238.0,96.5 238.5,95.8 239.0,95.1 239.5,95.2 240.0,95.9 240.5,96.6 241.0,97.3 241.5,98.0 242.0,98.7 242.5,99.4 243.0,100.1 243.5,100.8 244.0,100.0 244.5,99.3 245.0,98.6 245.5,97.9 246.0,97.2 246.5,96.5 247.0,95.8 247.5,95.1 248.0,95.2 248.5,95.9 249.0,96.6 249.5,97.3 250.0,98.0 250.5,98.7 251.0,99.4 251.5,100.1 252.0,100.8 252.5,100.1 253.0,99.4 253.5,98.7 254.0,98.0 254.5,97.3 255.0,96.6 255.5,95.9 256.0,95.2 256.5,95.1 257.0,95.8 257.5,96.5 258.0,97.2 258.5,97.9 259.0,98.6 259.5,99.3 260.0,100.0 260.5,100.8 261.0,100.1 261.5,99.4 262.0,98.7 262.5,98.0 263.0,97.3 263.5,96.6 264.0,95.9 264.5,95.2 265.0,95.1 265.5,95.8 266.0,96.5 266.5,97.2 267.0,97.9 267.5,98.6 268.0,99.3 268.5,100.0 269.0,100.7 269.5,100.2 270.0,99.5 270.5,98.8 271.0,98.1 271.5,97.4 272.0,96.7 272.5,96.0 273.0,95.3 273.5,95.0 274.0,95.7 274.5,96.4 275.0,97.1 275.5,97.8 276.0,98.5 276.5,99.3 277.0,100.0 277.5,100.7 278.0,100.2 278.5,99.5 279.0,98.8 279.5,98.1 280.0,97.4 280.5,96.7 281.0,96.0 281.5,95.3 282.0,95.0 282.5,95.7 283.0,96.4 283.5,97.1 284.0,97.8 284.5,98.5 285.0,99.2 285.5,99.9 286.0,100.6 286.5,100.3 287.0,99.6 287.5,98.9 288.0,98.2 288.5,97.5 289.0,96.8 289.5,96.1 290.0,95.4 290.5,94.9 291.0,95.6 291.5,96.3 292.0,97.0 292.5,97.8 293.0,98.5 293.5,99.2 294.0,99.9 294.5,100.6 295.0,100.3 295.5,99.6 296.0,98.9 296.5,98.2 297.0,97.5 297.5,96.8 298.0,96.1 298.5,95.4 299.0,94.9 299.5,95.6 300.0,96.3 300.5,97.0 301.0,97.7 301.5,98.4 302.0,99.1 302.5,99.8 303.0,100.5 303.5,100.4 304.0,99.7 304.5,99.0 305.0,98.3 305.5,97.6 306.0,96.9 306.5,96.2 307.0,95.5 307.5,94.8 308.0,95.5 308.5,96.3 309.0,97.0 309.5,97.7 310.0,98.4 310.5,99.1 311.0,99.8 311.5,100.5 312.0,100.4 312.5,99.7 313.0,99.0 313.5,98.3 314.0,97.6 314.5,96.9 315.0,96.2 315.5,95.5 316.0,94.8 316.5,95.5 317.0,96.2 317.5,96.9 318.0,97.6 318.5,98.3 319.0,99.0 319.5,99.7 320.0,100.4 320.5,100.5 321.0,99.8 321.5,99.1 322.0,98.4 322.5,97.7 323.0,97.0 323.5,96.3 324.0,95.5 324.5,94.8 325.0,95.5 325.5,96.2 326.0,96.9 326.5,97.6 327.0,98.3 327.5,99.0 328.0,99.7 328.5,100.4 329.0,100.5 329.5,99.8 330.0,99.1 330.5,98.4 331.0,97.7 331.5,97.0 332.0,96.3 332.5,95.6 333.0,94.9 333.5,95.4 334.0,96.1 334.5,96.8 335.0,97.5 335.5,98.2 336.0,98.9 336.5,99.6 337.0,100.3 337.5,100.6 338.0,99.9 338.5,99.2 339.0,98.5 339.5,97.8 340.0,97.0 340.5,96.3 341.0,95.6 341.5,94.9 342.0,95.4 342.5,96.1 343.0,96.8 343.5,97.5 344.0,98.2 344.5,98.9 345.0,99.6 345.5,100.3 346.0,100.6 346.5,99.9 347.0,99.2 347.5,98.5 348.0,97.8 348.5,97.1 349.0,96.4 349.5,95.7 350.0,95.0 350.5,95.3 351.0,96.0 351.5,96.7 352.0,97.4 352.5,98.1 353.0,98.8 353.5,99.5 354.0,100.2 354.5,100.7 355.0,100.0 355.5,99.3 356.0,98.5 356.5,97.8 357.0,97.1 357.5,96.4 358.0,95.7 358.5,95.0 359.0,95.3 359.5,96.0 360.0,96.7 360.5,97.4 361.0,98.1 361.5,98.8 362.0,99.5 362.5,100.2 363.0,100.7 363.5,100.0 364.0,99.3 364.5,98.6 365.0,97.9 365.5,97.2 366.0,96.5 366.5,95.8 367.0,95.1 367.5,95.2 368.0,95.9 368.5,96.6 369.0,97.3 369.5,98.0 370.0,98.7 370.5,99.4 371.0,100.1 371.5,100.8 372.0,100.0 372.5,99.3 373.0,98.6 373.5,97.9 374.0,97.2 374.5,96.5 375.0,95.8 375.5,95.1 376.0,95.2 376.5,95.9 377.0,96.6 377.5,97.3 378.0,98.0 378.5,98.7 379.0,99.4 379.5,100.1 380.0,100.8 380.5,100.1 381.0,99.4 381.5,98.7 382.0,98.0 382.5,97.3 383.0,96.6 383.5,95.9 384.0,95.2 384.5,95.1 385.0,95.8 385.5,96.5 386.0,97.2 386.5,97.9 387.0,98.6 387.5,99.3 388.0,100.0 388.5,100.8 389.0,100.1 389.5,99.4 390.0,98.7 390.5,98.0 391.0,97.3 391.5,96.6 392.0,95.9 392.5,95.2 393.0,95.1 393.5,95.8 394.0,96.5 394.5,97.2 395.0,97.9 395.5,98.6 396.0,99.3 396.5,100.0 397.0,100.7 397.5,100.2 398.0,99.5 398.5,98.8 399.0,98.1 399.5,97.4 400.0,96.7 400.5,96.0 401.0,95.3 401.5,95.0 402.0,95.7 402.5,96.4 403.0,97.1 403.5,97.8 404.0,98.5 404.5,99.3 405.0,100.0 405.5,100.7 406.0,100.2 406.5,99.5 407.0,98.8 407.5,98.1 408.0,97.4 408.5,96.7 409.0,96.0 409.5,95.3 410.0,95.0 410.5,95.7 411.0,96.4 411.5,97.1 412.0,97.8 412.5,98.5 413.0,99.2 413.5,99.9 414.0,100.6 414.5,100.3 415.0,99.6 415.5,98.9 416.0,98.2 416.5,97.5 417.0,96.8 417.5,96.1 418.0,95.4 418.5,94.9 419.0,95.6 419.5,96.3 420.0,97.0 420.5,97.8 421.0,98.5 421.5,99.2 422.0,99.9 422.5,100.6 423.0,100.3 423.5,99.6 424.0,98.9 424.5,98.2 425.0,97.5 425.5,96.8 426.0,96.1 426.5,95.4 427.0,94.9 427.5,95.6 428.0,96.3 428.5,97.0 429.0,97.7 429.5,98.4 430.0,99.1 430.5,99.8 431.0,100.5 431.5,100.4 432.0,99.7 432.5,99.0 433.0,98.3 433.5,97.6 434.0,96.9 434.5,96.2 435.0,95.5 435.5,94.8 436.0,95.5 436.5,96.3 437.0,97.0 437.5,97.7 438.0,98.4 438.5,99.1 439.0,99.8 439.5,100.5 440.0,100.4 440.5,99.7 441.0,99.0 441.5,98.3 442.0,97.6 442.5,96.9 443.0,96.2 443.5,95.5 444.0,94.8 444.5,95.5 445.0,96.2 445.5,96.9 446.0,97.6 446.5,98.3 447.0,99.0 447.5,99.7 448.0,100.4 448.5,100.5 449.0,99.8 449.5,99.1 450.0,98.4 450.5,97.7 451.0,97.0 451.5,96.3 452.0,95.5 452.5,94.8 453.0,95.5 453.5,96.2 454.0,96.9 454.5,97.6 455.0,98.3 455.5,99.0 456.0,99.7 456.5,100.4 457.0,100.5 457.5,99.8 458.0,99.1 458.5,98.4 459.0,97.7 459.5,97.0 460.0,96.3" fill="none" stroke="#14e014" stroke-width="2.4" stroke-linejoin="round" shape-rendering="crispEdges"/><polyline transform="translate(0,0.8)" points="0.0,95.2 0.5,95.1 1.0,95.8 1.5,96.5 2.0,97.2 2.5,97.9 3.0,98.6 3.5,99.3 4.0,100.0 4.5,100.8 5.0,100.1 5.5,99.4 6.0,98.7 6.5,98.0 7.0,97.3 7.5,96.6 8.0,95.9 8.5,95.2 9.0,95.1 9.5,95.8 10.0,96.5 10.5,97.2 11.0,97.9 11.5,98.6 12.0,99.3 12.5,100.0 13.0,100.7 13.5,100.2 14.0,99.5 14.5,98.8 15.0,98.1 15.5,97.4 16.0,96.7 16.5,96.0 17.0,95.3 17.5,95.0 18.0,95.7 18.5,96.4 19.0,97.1 19.5,97.8 20.0,98.5 20.5,99.3 21.0,100.0 21.5,100.7 22.0,100.2 22.5,99.5 23.0,98.8 23.5,98.1 24.0,97.4 24.5,96.7 25.0,96.0 25.5,95.3 26.0,95.0 26.5,95.7 27.0,96.4 27.5,97.1 28.0,97.8 28.5,98.5 29.0,99.2 29.5,99.9 30.0,100.6 30.5,100.3 31.0,99.6 31.5,98.9 32.0,98.2 32.5,97.5 33.0,96.8 33.5,96.1 34.0,95.4 34.5,94.9 35.0,95.6 35.5,96.3 36.0,97.0 36.5,97.8 37.0,98.5 37.5,99.2 38.0,99.9 38.5,100.6 39.0,100.3 39.5,99.6 40.0,98.9 40.5,98.2 41.0,97.5 41.5,96.8 42.0,96.1 42.5,95.4 43.0,94.9 43.5,95.6 44.0,96.3 44.5,97.0 45.0,97.7 45.5,98.4 46.0,99.1 46.5,99.8 47.0,100.5 47.5,100.4 48.0,99.7 48.5,99.0 49.0,98.3 49.5,97.6 50.0,96.9 50.5,96.2 51.0,95.5 51.5,94.8 52.0,95.5 52.5,96.3 53.0,97.0 53.5,97.7 54.0,98.4 54.5,99.1 55.0,99.8 55.5,100.5 56.0,100.4 56.5,99.7 57.0,99.0 57.5,98.3 58.0,97.6 58.5,96.9 59.0,96.2 59.5,95.5 60.0,94.8 60.5,95.5 61.0,96.2 61.5,96.9 62.0,97.6 62.5,98.3 63.0,99.0 63.5,99.7 64.0,100.4 64.5,100.5 65.0,99.8 65.5,99.1 66.0,98.4 66.5,97.7 67.0,97.0 67.5,96.3 68.0,95.5 68.5,94.8 69.0,95.5 69.5,96.2 70.0,96.9 70.5,97.6 71.0,98.3 71.5,99.0 72.0,99.7 72.5,100.4 73.0,100.5 73.5,99.8 74.0,99.1 74.5,98.4 75.0,97.7 75.5,97.0 76.0,96.3 76.5,95.6 77.0,94.9 77.5,95.4 78.0,96.1 78.5,96.8 79.0,97.5 79.5,98.2 80.0,98.9 80.5,99.6 81.0,100.3 81.5,100.6 82.0,99.9 82.5,99.2 83.0,98.5 83.5,97.8 84.0,97.0 84.5,96.3 85.0,95.6 85.5,94.9 86.0,95.4 86.5,96.1 87.0,96.8 87.5,97.5 88.0,98.2 88.5,98.9 89.0,99.6 89.5,100.3 90.0,100.6 90.5,99.9 91.0,99.2 91.5,98.5 92.0,97.8 92.5,97.1 93.0,96.4 93.5,95.7 94.0,95.0 94.5,95.3 95.0,96.0 95.5,96.7 96.0,97.4 96.5,98.1 97.0,98.8 97.5,99.5 98.0,100.2 98.5,100.7 99.0,100.0 99.5,99.3 100.0,98.5 100.5,97.8 101.0,97.1 101.5,96.4 102.0,95.7 102.5,95.0 103.0,95.3 103.5,96.0 104.0,96.7 104.5,97.4 105.0,98.1 105.5,98.8 106.0,99.5 106.5,100.2 107.0,100.7 107.5,100.0 108.0,99.3 108.5,98.6 109.0,97.9 109.5,97.2 110.0,96.5 110.5,95.8 111.0,95.1 111.5,95.2 112.0,95.9 112.5,96.6 113.0,97.3 113.5,98.0 114.0,98.7 114.5,99.4 115.0,100.1 115.5,100.8 116.0,100.0 116.5,99.3 117.0,98.6 117.5,97.9 118.0,97.2 118.5,96.5 119.0,95.8 119.5,95.1 120.0,95.2 120.5,95.9 121.0,96.6 121.5,97.3 122.0,98.0 122.5,98.7 123.0,99.4 123.5,100.1 124.0,100.8 124.5,100.1 125.0,99.4 125.5,98.7 126.0,98.0 126.5,97.3 127.0,96.6 127.5,95.9 128.0,95.2 128.5,95.1 129.0,95.8 129.5,96.5 130.0,97.2 130.5,97.9 131.0,98.6 131.5,99.3 132.0,100.0 132.5,100.8 133.0,100.1 133.5,99.4 134.0,98.7 134.5,98.0 135.0,97.3 135.5,96.6 136.0,95.9 136.5,95.2 137.0,95.1 137.5,95.8 138.0,96.5 138.5,97.2 139.0,97.9 139.5,98.6 140.0,99.3 140.5,100.0 141.0,100.7 141.5,100.2 142.0,99.5 142.5,98.8 143.0,98.1 143.5,97.4 144.0,96.7 144.5,96.0 145.0,95.3 145.5,95.0 146.0,95.7 146.5,96.4 147.0,97.1 147.5,97.8 148.0,98.5 148.5,99.3 149.0,100.0 149.5,100.7 150.0,100.2 150.5,99.5 151.0,98.8 151.5,98.1 152.0,97.4 152.5,96.7 153.0,96.0 153.5,95.3 154.0,95.0 154.5,95.7 155.0,96.4 155.5,97.1 156.0,97.8 156.5,98.5 157.0,99.2 157.5,99.9 158.0,100.6 158.5,100.3 159.0,99.6 159.5,98.9 160.0,98.2 160.5,97.5 161.0,96.8 161.5,96.1 162.0,95.4 162.5,94.9 163.0,95.6 163.5,96.3 164.0,97.0 164.5,97.8 165.0,98.5 165.5,99.2 166.0,99.9 166.5,100.6 167.0,100.3 167.5,99.6 168.0,98.9 168.5,98.2 169.0,97.5 169.5,96.8 170.0,96.1 170.5,95.4 171.0,94.9 171.5,95.6 172.0,96.3 172.5,97.0 173.0,97.7 173.5,98.4 174.0,99.1 174.5,99.8 175.0,100.5 175.5,100.4 176.0,99.7 176.5,99.0 177.0,98.3 177.5,97.6 178.0,96.9 178.5,96.2 179.0,95.5 179.5,94.8 180.0,95.5 180.5,96.3 181.0,97.0 181.5,97.7 182.0,98.4 182.5,99.1 183.0,99.8 183.5,100.5 184.0,100.4 184.5,99.7 185.0,99.0 185.5,98.3 186.0,97.6 186.5,96.9 187.0,96.2 187.5,95.5 188.0,94.8 188.5,95.5 189.0,96.2 189.5,96.9 190.0,97.6 190.5,98.3 191.0,99.0 191.5,99.7 192.0,100.4 192.5,100.5 193.0,99.8 193.5,99.1 194.0,98.4 194.5,97.7 195.0,97.0 195.5,96.3 196.0,95.5 196.5,94.8 197.0,95.5 197.5,96.2 198.0,96.9 198.5,97.6 199.0,98.3 199.5,99.0 200.0,99.7 200.5,100.4 201.0,100.5 201.5,99.8 202.0,99.1 202.5,98.4 203.0,97.7 203.5,97.0 204.0,96.3 204.5,95.6 205.0,94.9 205.5,95.4 206.0,96.1 206.5,96.8 207.0,97.5 207.5,98.2 208.0,98.9 208.5,99.6 209.0,100.3 209.5,100.6 210.0,99.9 210.5,99.2 211.0,98.5 211.5,97.8 212.0,97.0 212.5,96.3 213.0,95.6 213.5,94.9 214.0,95.4 214.5,96.1 215.0,96.8 215.5,97.5 216.0,98.2 216.5,98.9 217.0,99.6 217.5,100.3 218.0,100.6 218.5,99.9 219.0,99.2 219.5,98.5 220.0,97.8 220.5,97.1 221.0,96.4 221.5,95.7 222.0,95.0 222.5,95.3 223.0,96.0 223.5,96.7 224.0,97.4 224.5,98.1 225.0,98.8 225.5,99.5 226.0,100.2 226.5,100.7 227.0,100.0 227.5,99.3 228.0,98.5 228.5,97.8 229.0,97.1 229.5,96.4 230.0,95.7 230.5,95.0 231.0,95.3 231.5,96.0 232.0,96.7 232.5,97.4 233.0,98.1 233.5,98.8 234.0,99.5 234.5,100.2 235.0,100.7 235.5,100.0 236.0,99.3 236.5,98.6 237.0,97.9 237.5,97.2 238.0,96.5 238.5,95.8 239.0,95.1 239.5,95.2 240.0,95.9 240.5,96.6 241.0,97.3 241.5,98.0 242.0,98.7 242.5,99.4 243.0,100.1 243.5,100.8 244.0,100.0 244.5,99.3 245.0,98.6 245.5,97.9 246.0,97.2 246.5,96.5 247.0,95.8 247.5,95.1 248.0,95.2 248.5,95.9 249.0,96.6 249.5,97.3 250.0,98.0 250.5,98.7 251.0,99.4 251.5,100.1 252.0,100.8 252.5,100.1 253.0,99.4 253.5,98.7 254.0,98.0 254.5,97.3 255.0,96.6 255.5,95.9 256.0,95.2 256.5,95.1 257.0,95.8 257.5,96.5 258.0,97.2 258.5,97.9 259.0,98.6 259.5,99.3 260.0,100.0 260.5,100.8 261.0,100.1 261.5,99.4 262.0,98.7 262.5,98.0 263.0,97.3 263.5,96.6 264.0,95.9 264.5,95.2 265.0,95.1 265.5,95.8 266.0,96.5 266.5,97.2 267.0,97.9 267.5,98.6 268.0,99.3 268.5,100.0 269.0,100.7 269.5,100.2 270.0,99.5 270.5,98.8 271.0,98.1 271.5,97.4 272.0,96.7 272.5,96.0 273.0,95.3 273.5,95.0 274.0,95.7 274.5,96.4 275.0,97.1 275.5,97.8 276.0,98.5 276.5,99.3 277.0,100.0 277.5,100.7 278.0,100.2 278.5,99.5 279.0,98.8 279.5,98.1 280.0,97.4 280.5,96.7 281.0,96.0 281.5,95.3 282.0,95.0 282.5,95.7 283.0,96.4 283.5,97.1 284.0,97.8 284.5,98.5 285.0,99.2 285.5,99.9 286.0,100.6 286.5,100.3 287.0,99.6 287.5,98.9 288.0,98.2 288.5,97.5 289.0,96.8 289.5,96.1 290.0,95.4 290.5,94.9 291.0,95.6 291.5,96.3 292.0,97.0 292.5,97.8 293.0,98.5 293.5,99.2 294.0,99.9 294.5,100.6 295.0,100.3 295.5,99.6 296.0,98.9 296.5,98.2 297.0,97.5 297.5,96.8 298.0,96.1 298.5,95.4 299.0,94.9 299.5,95.6 300.0,96.3 300.5,97.0 301.0,97.7 301.5,98.4 302.0,99.1 302.5,99.8 303.0,100.5 303.5,100.4 304.0,99.7 304.5,99.0 305.0,98.3 305.5,97.6 306.0,96.9 306.5,96.2 307.0,95.5 307.5,94.8 308.0,95.5 308.5,96.3 309.0,97.0 309.5,97.7 310.0,98.4 310.5,99.1 311.0,99.8 311.5,100.5 312.0,100.4 312.5,99.7 313.0,99.0 313.5,98.3 314.0,97.6 314.5,96.9 315.0,96.2 315.5,95.5 316.0,94.8 316.5,95.5 317.0,96.2 317.5,96.9 318.0,97.6 318.5,98.3 319.0,99.0 319.5,99.7 320.0,100.4 320.5,100.5 321.0,99.8 321.5,99.1 322.0,98.4 322.5,97.7 323.0,97.0 323.5,96.3 324.0,95.5 324.5,94.8 325.0,95.5 325.5,96.2 326.0,96.9 326.5,97.6 327.0,98.3 327.5,99.0 328.0,99.7 328.5,100.4 329.0,100.5 329.5,99.8 330.0,99.1 330.5,98.4 331.0,97.7 331.5,97.0 332.0,96.3 332.5,95.6 333.0,94.9 333.5,95.4 334.0,96.1 334.5,96.8 335.0,97.5 335.5,98.2 336.0,98.9 336.5,99.6 337.0,100.3 337.5,100.6 338.0,99.9 338.5,99.2 339.0,98.5 339.5,97.8 340.0,97.0 340.5,96.3 341.0,95.6 341.5,94.9 342.0,95.4 342.5,96.1 343.0,96.8 343.5,97.5 344.0,98.2 344.5,98.9 345.0,99.6 345.5,100.3 346.0,100.6 346.5,99.9 347.0,99.2 347.5,98.5 348.0,97.8 348.5,97.1 349.0,96.4 349.5,95.7 350.0,95.0 350.5,95.3 351.0,96.0 351.5,96.7 352.0,97.4 352.5,98.1 353.0,98.8 353.5,99.5 354.0,100.2 354.5,100.7 355.0,100.0 355.5,99.3 356.0,98.5 356.5,97.8 357.0,97.1 357.5,96.4 358.0,95.7 358.5,95.0 359.0,95.3 359.5,96.0 360.0,96.7 360.5,97.4 361.0,98.1 361.5,98.8 362.0,99.5 362.5,100.2 363.0,100.7 363.5,100.0 364.0,99.3 364.5,98.6 365.0,97.9 365.5,97.2 366.0,96.5 366.5,95.8 367.0,95.1 367.5,95.2 368.0,95.9 368.5,96.6 369.0,97.3 369.5,98.0 370.0,98.7 370.5,99.4 371.0,100.1 371.5,100.8 372.0,100.0 372.5,99.3 373.0,98.6 373.5,97.9 374.0,97.2 374.5,96.5 375.0,95.8 375.5,95.1 376.0,95.2 376.5,95.9 377.0,96.6 377.5,97.3 378.0,98.0 378.5,98.7 379.0,99.4 379.5,100.1 380.0,100.8 380.5,100.1 381.0,99.4 381.5,98.7 382.0,98.0 382.5,97.3 383.0,96.6 383.5,95.9 384.0,95.2 384.5,95.1 385.0,95.8 385.5,96.5 386.0,97.2 386.5,97.9 387.0,98.6 387.5,99.3 388.0,100.0 388.5,100.8 389.0,100.1 389.5,99.4 390.0,98.7 390.5,98.0 391.0,97.3 391.5,96.6 392.0,95.9 392.5,95.2 393.0,95.1 393.5,95.8 394.0,96.5 394.5,97.2 395.0,97.9 395.5,98.6 396.0,99.3 396.5,100.0 397.0,100.7 397.5,100.2 398.0,99.5 398.5,98.8 399.0,98.1 399.5,97.4 400.0,96.7 400.5,96.0 401.0,95.3 401.5,95.0 402.0,95.7 402.5,96.4 403.0,97.1 403.5,97.8 404.0,98.5 404.5,99.3 405.0,100.0 405.5,100.7 406.0,100.2 406.5,99.5 407.0,98.8 407.5,98.1 408.0,97.4 408.5,96.7 409.0,96.0 409.5,95.3 410.0,95.0 410.5,95.7 411.0,96.4 411.5,97.1 412.0,97.8 412.5,98.5 413.0,99.2 413.5,99.9 414.0,100.6 414.5,100.3 415.0,99.6 415.5,98.9 416.0,98.2 416.5,97.5 417.0,96.8 417.5,96.1 418.0,95.4 418.5,94.9 419.0,95.6 419.5,96.3 420.0,97.0 420.5,97.8 421.0,98.5 421.5,99.2 422.0,99.9 422.5,100.6 423.0,100.3 423.5,99.6 424.0,98.9 424.5,98.2 425.0,97.5 425.5,96.8 426.0,96.1 426.5,95.4 427.0,94.9 427.5,95.6 428.0,96.3 428.5,97.0 429.0,97.7 429.5,98.4 430.0,99.1 430.5,99.8 431.0,100.5 431.5,100.4 432.0,99.7 432.5,99.0 433.0,98.3 433.5,97.6 434.0,96.9 434.5,96.2 435.0,95.5 435.5,94.8 436.0,95.5 436.5,96.3 437.0,97.0 437.5,97.7 438.0,98.4 438.5,99.1 439.0,99.8 439.5,100.5 440.0,100.4 440.5,99.7 441.0,99.0 441.5,98.3 442.0,97.6 442.5,96.9 443.0,96.2 443.5,95.5 444.0,94.8 444.5,95.5 445.0,96.2 445.5,96.9 446.0,97.6 446.5,98.3 447.0,99.0 447.5,99.7 448.0,100.4 448.5,100.5 449.0,99.8 449.5,99.1 450.0,98.4 450.5,97.7 451.0,97.0 451.5,96.3 452.0,95.5 452.5,94.8 453.0,95.5 453.5,96.2 454.0,96.9 454.5,97.6 455.0,98.3 455.5,99.0 456.0,99.7 456.5,100.4 457.0,100.5 457.5,99.8 458.0,99.1 458.5,98.4 459.0,97.7 459.5,97.0 460.0,96.3" fill="none" stroke="#14e014" stroke-width="2.4" stroke-linejoin="round" shape-rendering="crispEdges"/></svg>
<div style="left:468px;top:154px;width:79px;height:73px;background:#b3b3b3;border-left:1px solid #d6d6d6;border-top:1px solid #d6d6d6;"></div>
<svg style="left:470px;top:160px;" width="14" height="15" viewBox="0 0 14 15"><circle cx="6.8" cy="7.20" r="5.15" fill="#fff" stroke="#111" stroke-width="1.35"/><path d="M6.8 4.10 l3.1 3.1 l-3.1 3.1 l-3.1 -3.1 Z" fill="#000" stroke="#000" stroke-width="0.8" stroke-linejoin="round"/></svg>
<div class="t" style="top:157.70px;font-size:12.5px;line-height:18px;color:#000;letter-spacing:-1.498px;left:485.8px;"><span style="">V1</span></div>
<svg style="left:519px;top:157px;" width="26" height="21" viewBox="0 0 26 21"><g transform="translate(0.2,1.20)"><rect x="0.4" y="0.4" width="22.8" height="17.6" fill="#000" stroke="#cdcdcd" stroke-width="1.1"/><path d="M2 13.5 L10.4 2.9 L18.3 13.5 L21.8 8.8" fill="none" stroke="#fff" stroke-width="1.3"/></g></svg>
<svg style="left:470px;top:180px;" width="14" height="15" viewBox="0 0 14 15"><circle cx="6.8" cy="7.90" r="5.15" fill="#fff" stroke="#111" stroke-width="1.35"/><path d="M6.8 4.80 l3.1 3.1 l-3.1 3.1 l-3.1 -3.1 Z" fill="#000" stroke="#000" stroke-width="0.8" stroke-linejoin="round"/></svg>
<div class="t" style="top:180.50px;font-size:12.5px;line-height:18px;color:#000;letter-spacing:-1.498px;left:485.8px;"><span style="">V2</span></div>
<svg style="left:519px;top:180px;" width="26" height="21" viewBox="0 0 26 21"><g transform="translate(0.2,1.10)"><rect x="0.4" y="0.4" width="22.8" height="17.6" fill="#000" stroke="#cdcdcd" stroke-width="1.1"/><path d="M2 13.8 L12.3 3.2 L21.8 12.5" fill="none" stroke="#f04545" stroke-width="1.3"/></g></svg>
<svg style="left:470px;top:201px;" width="14" height="15" viewBox="0 0 14 15"><circle cx="6.8" cy="7.70" r="5.15" fill="#fff" stroke="#111" stroke-width="1.35"/><path d="M6.8 4.60 l3.1 3.1 l-3.1 3.1 l-3.1 -3.1 Z" fill="#000" stroke="#000" stroke-width="0.8" stroke-linejoin="round"/></svg>
<div class="t" style="top:203.40px;font-size:12.5px;line-height:18px;color:#000;letter-spacing:-1.498px;left:485.8px;"><span style="">V3</span></div>
<svg style="left:519px;top:203px;" width="26" height="21" viewBox="0 0 26 21"><g transform="translate(0.2,1.20)"><rect x="0.4" y="0.4" width="22.8" height="17.6" fill="#000" stroke="#cdcdcd" stroke-width="1.1"/><path d="M2 13.5 L10.4 2.9 L18.3 13.5 L21.8 8.8" fill="none" stroke="#10e010" stroke-width="1.3"/></g></svg>
<div style="left:468px;top:433px;width:79px;height:73px;background:#b3b3b3;border-left:1px solid #d6d6d6;border-top:1px solid #d6d6d6;"></div>
<svg style="left:470px;top:439px;" width="14" height="15" viewBox="0 0 14 15"><circle cx="6.8" cy="7.10" r="5.15" fill="#fff" stroke="#111" stroke-width="1.35"/><path d="M6.8 4.00 l3.1 3.1 l-3.1 3.1 l-3.1 -3.1 Z" fill="#000" stroke="#000" stroke-width="0.8" stroke-linejoin="round"/></svg>
<div class="t" style="top:436.60px;font-size:12.5px;line-height:18px;color:#000;letter-spacing:-1.498px;left:485.8px;"><span style="">A1</span></div>
<svg style="left:519px;top:436px;" width="26" height="21" viewBox="0 0 26 21"><g transform="translate(0.2,1.10)"><rect x="0.4" y="0.4" width="22.8" height="17.6" fill="#000" stroke="#cdcdcd" stroke-width="1.1"/><path d="M2 13.5 L10.4 2.9 L18.3 13.5 L21.8 8.8" fill="none" stroke="#fff" stroke-width="1.3"/></g></svg>
<svg style="left:470px;top:459px;" width="14" height="15" viewBox="0 0 14 15"><circle cx="6.8" cy="7.80" r="5.15" fill="#fff" stroke="#111" stroke-width="1.35"/><path d="M6.8 4.70 l3.1 3.1 l-3.1 3.1 l-3.1 -3.1 Z" fill="#000" stroke="#000" stroke-width="0.8" stroke-linejoin="round"/></svg>
<div class="t" style="top:459.40px;font-size:12.5px;line-height:18px;color:#000;letter-spacing:-1.498px;left:485.8px;"><span style="">A2</span></div>
<svg style="left:519px;top:459px;" width="26" height="21" viewBox="0 0 26 21"><g transform="translate(0.2,1.00)"><rect x="0.4" y="0.4" width="22.8" height="17.6" fill="#000" stroke="#cdcdcd" stroke-width="1.1"/><path d="M2 13.8 L12.3 3.2 L21.8 12.5" fill="none" stroke="#f04545" stroke-width="1.3"/></g></svg>
<svg style="left:470px;top:480px;" width="14" height="15" viewBox="0 0 14 15"><circle cx="6.8" cy="7.60" r="5.15" fill="#fff" stroke="#111" stroke-width="1.35"/><path d="M6.8 4.50 l3.1 3.1 l-3.1 3.1 l-3.1 -3.1 Z" fill="#000" stroke="#000" stroke-width="0.8" stroke-linejoin="round"/></svg>
<div class="t" style="top:482.30px;font-size:12.5px;line-height:18px;color:#000;letter-spacing:-1.498px;left:485.8px;"><span style="">A3</span></div>
<svg style="left:519px;top:482px;" width="26" height="21" viewBox="0 0 26 21"><g transform="translate(0.2,1.10)"><rect x="0.4" y="0.4" width="22.8" height="17.6" fill="#000" stroke="#cdcdcd" stroke-width="1.1"/><path d="M2 13.5 L10.4 2.9 L18.3 13.5 L21.8 8.8" fill="none" stroke="#10e010" stroke-width="1.3"/></g></svg>
<div style="left:559px;top:152px;width:10px;height:239px;background:#3a3a3a;border:1px solid #cfcfcf;border-left-color:#a2a2a2;border-top-color:#a2a2a2;"></div>
<svg style="left:557px;top:144px;" width="14" height="7" viewBox="0 0 14 7"><path d="M1.5 6.5 L7 0.8 L12.5 6.5 Z" fill="#8c8c8c" stroke="#d4d4d4" stroke-width="0.8"/></svg>
<svg style="left:557px;top:393px;" width="14" height="8" viewBox="0 0 14 8"><path d="M1.5 0.6 L7 7.4 L12.5 0.6 Z" fill="#8c8c8c" stroke="#d4d4d4" stroke-width="0.8"/></svg>
<svg style="left:544px;top:260.5px;" width="34" height="18" viewBox="0 0 34 18"><path d="M1.3 9 L32 1.2 L32 16.8 Z" fill="#2f8fe8"/></svg>
<div style="left:559px;top:431px;width:10px;height:226px;background:#808080;border:1px solid #cfcfcf;border-left-color:#a2a2a2;border-top-color:#a2a2a2;"></div>
<svg style="left:557px;top:424px;" width="14" height="6" viewBox="0 0 14 6"><path d="M1.5 5.5 L7 0.8 L12.5 5.5 Z" fill="#9e9e9e" stroke="#d4d4d4" stroke-width="0.8"/></svg>
<svg style="left:557px;top:659px;" width="14" height="6" viewBox="0 0 14 6"><path d="M1.5 0.6 L7 5.4 L12.5 0.6 Z" fill="#9e9e9e" stroke="#d4d4d4" stroke-width="0.8"/></svg>
<svg style="left:544px;top:535.5px;" width="34" height="18" viewBox="0 0 34 18"><path d="M1.3 9 L32 1.2 L32 16.8 Z" fill="#7ea8d8"/></svg>
<div class="t" style="top:146.20px;font-size:12.5px;line-height:18px;color:#000;font-weight:bold;letter-spacing:-0.332px;left:578.2px;"><span style="">V Trigger</span></div>
<div class="t" style="top:171.30px;font-size:12.5px;line-height:18px;color:#000;font-weight:bold;letter-spacing:-0.205px;left:588.2px;"><span style="">Voltage</span></div>
<div class="t" style="top:185.80px;font-size:12.5px;line-height:18px;color:#000;font-weight:bold;letter-spacing:-0.801px;left:588.5px;"><span style="">Range</span></div>
<div class="t" style="top:206.60px;font-size:12px;line-height:18px;color:#000;left:200.5px;width:400.000px;text-align:right;"><span style="letter-spacing:-0.4px;">100</span></div>
<div class="t" style="top:228.80px;font-size:12px;line-height:18px;color:#000;left:200.5px;width:400.000px;text-align:right;"><span style="letter-spacing:-0.4px;">75</span></div>
<div class="t" style="top:251.20px;font-size:12px;line-height:18px;color:#000;left:200.5px;width:400.000px;text-align:right;"><span style="letter-spacing:-0.4px;">50</span></div>
<div class="t" style="top:273.40px;font-size:12px;line-height:18px;color:#000;left:200.5px;width:400.000px;text-align:right;"><span style="letter-spacing:-0.4px;">25</span></div>
<div class="t" style="top:295.40px;font-size:12px;line-height:18px;color:#000;left:200.5px;width:400.000px;text-align:right;"><span style="letter-spacing:-0.4px;">0</span></div>
<svg style="left:610px;top:205px;" width="25" height="7" viewBox="0 0 25 7"><path d="M0.5 6.5 L12.5 0.5 L24.5 6.5 Z" fill="#828282" stroke="#8c8c8c" stroke-width="0.6"/></svg>
<div style="left:611px;top:214px;width:23px;height:91px;background:#bababa;border:1px solid #e2e2e2;border-top-color:#9a9a9a;border-left-color:#8c8c8c;"></div>
<div style="left:612px;top:277.7px;width:21px;height:26.30000000000001px;background:#969696;"></div>
<svg style="left:610px;top:307px;" width="25" height="8" viewBox="0 0 25 8"><path d="M0.5 0.5 L12.5 7.5 L24.5 0.5 Z" fill="#8a8a8a" stroke="#dcdcdc" stroke-width="0.6"/></svg>
<div style="left:608px;top:272.2px;width:29px;height:11px;background:#000;"></div>
<div style="left:608px;top:277.2px;width:29px;height:1px;background:#8c8c8c;"></div>
<div class="t" style="top:326.50px;font-size:12.5px;line-height:18px;color:#000;font-weight:bold;letter-spacing:-0.338px;left:580px;"><span style="">Subtract</span></div>
<div class="t" style="top:341.80px;font-size:12.5px;line-height:18px;color:#000;font-weight:bold;letter-spacing:-0.375px;left:580px;"><span style="">Zero Seq</span></div>
<div class="btn" style="left:579px;top:365px;width:64px;height:24px;"></div>
<div class="t" style="top:368.20px;font-size:12.5px;line-height:18px;color:#000;font-weight:bold;letter-spacing:-1.167px;left:410.6px;width:398.833px;text-align:center;"><span style="">OFF</span></div>
<div style="left:573px;top:428px;width:52px;height:17px;background:#b7b7b7;"></div>
<div class="t" style="top:427.20px;font-size:12.5px;line-height:18px;color:#8c8c8c;font-weight:bold;letter-spacing:-0.281px;left:575.4px;"><span style="">I Trigger</span></div>
<div class="t" style="top:452.70px;font-size:12.5px;line-height:18px;color:#000;font-weight:bold;letter-spacing:-0.294px;left:585.9px;"><span style="">Current</span></div>
<div class="t" style="top:467.70px;font-size:12.5px;line-height:18px;color:#000;font-weight:bold;letter-spacing:-0.741px;left:585.9px;"><span style="">Range</span></div>
<div class="t" style="top:488.30px;font-size:12px;line-height:18px;color:#000;left:199px;width:400.000px;text-align:right;"><span style="letter-spacing:-0.4px;">50</span></div>
<div class="t" style="top:507.80px;font-size:12px;line-height:18px;color:#000;left:199px;width:400.000px;text-align:right;"><span style="letter-spacing:-0.4px;">40</span></div>
<div class="t" style="top:526.70px;font-size:12px;line-height:18px;color:#000;left:199px;width:400.000px;text-align:right;"><span style="letter-spacing:-0.4px;">30</span></div>
<div class="t" style="top:546.40px;font-size:12px;line-height:18px;color:#000;left:199px;width:400.000px;text-align:right;"><span style="letter-spacing:-0.4px;">20</span></div>
<div class="t" style="top:565.30px;font-size:12px;line-height:18px;color:#000;left:199px;width:400.000px;text-align:right;"><span style="letter-spacing:-0.4px;">10</span></div>
<div class="t" style="top:584.60px;font-size:12px;line-height:18px;color:#000;left:199px;width:400.000px;text-align:right;"><span style="letter-spacing:-0.4px;">0</span></div>
<svg style="left:608px;top:487px;" width="25" height="7" viewBox="0 0 25 7"><path d="M0.5 6.5 L12.5 0.5 L24.5 6.5 Z" fill="#828282" stroke="#8c8c8c" stroke-width="0.6"/></svg>
<div style="left:609px;top:496px;width:23px;height:100px;background:#bababa;border:1px solid #e2e2e2;border-top-color:#9a9a9a;border-left-color:#8c8c8c;"></div>
<svg style="left:608px;top:598px;" width="25" height="8" viewBox="0 0 25 8"><path d="M0.5 0.5 L12.5 7.5 L24.5 0.5 Z" fill="#8a8a8a" stroke="#dcdcdc" stroke-width="0.6"/></svg>
<div style="left:606px;top:585.7px;width:29px;height:11px;background:#000;"></div>
<div style="left:606px;top:590.7px;width:29px;height:1px;background:#8c8c8c;"></div>
<div class="btn" style="left:584px;top:622px;width:54px;height:36px;"></div>
<div class="t" style="top:625.20px;font-size:12.5px;line-height:18px;color:#000;font-weight:bold;letter-spacing:-0.798px;left:598.8px;"><span style="">Zero</span></div>
<div class="t" style="top:638.40px;font-size:12.5px;line-height:18px;color:#000;font-weight:bold;letter-spacing:-1.184px;left:596px;"><span style="">Amps</span></div>
<div style="left:662px;top:110px;width:363px;height:366px;border-left:2px solid #d9d9d9;border-top:2px solid #d9d9d9;border-right:1px solid #4e4e4e;border-bottom:1px solid #4e4e4e;"><div style="left:0;top:0;right:0;bottom:0;border-left:1px solid #4e4e4e;border-top:1px solid #4e4e4e;border-right:2px solid #d9d9d9;border-bottom:2px solid #d9d9d9;"></div></div>
<div class="t" style="top:124.00px;font-size:16px;line-height:18px;color:#000;font-weight:bold;letter-spacing:-0.115px;left:701.6px;"><span style="">Electrical Measurements</span></div>
<div class="t" style="top:162.00px;font-size:12.5px;line-height:18px;color:#000;letter-spacing:-0.588px;left:683.2px;"><span style="text-decoration:underline;text-decoration-skip-ink:none;text-underline-offset:0.8px;-webkit-text-stroke:0.3px #000;">Ch1 Trigger Source</span></div>
<div class="t" style="top:182.20px;font-size:12.5px;line-height:18px;color:#000;font-weight:bold;letter-spacing:-1.234px;left:683.2px;"><span style="">Amps</span></div>
<svg style="left:735px;top:179px;" width="26" height="21" viewBox="0 0 26 21"><path d="M6 7.1 L21.8 1.4 M6 13 L21.8 19.5" fill="none" stroke="#505050" stroke-width="0.9"/><rect x="22.2" y="2" width="2.7" height="17.1" fill="#4a4a4a"/><rect x="23.1" y="2.6" width="0.9" height="15.9" fill="#666"/><ellipse cx="3.8" cy="9.9" rx="2.5" ry="3.6" fill="#d8d8d8" stroke="#a4a4a4" stroke-width="0.7"/></svg>
<div class="t" style="top:181.80px;font-size:12.5px;line-height:18px;color:#000;font-weight:bold;letter-spacing:-0.848px;left:761.3px;"><span style="">Volts</span></div>
<div class="t" style="top:157.70px;font-size:12.5px;line-height:18px;color:#000;font-weight:bold;letter-spacing:-0.547px;left:827.5px;"><span style="">Fundamental Frequency</span></div>
<div class="ind" style="left:836px;top:177px;width:66px;height:28px;"></div>
<div class="t" style="top:182.00px;font-size:16.5px;line-height:18px;color:#000;letter-spacing:-0.439px;left:841.9px;"><span style="">120.0</span></div>
<div class="t" style="top:183.00px;font-size:12.5px;line-height:18px;color:#000;font-weight:bold;letter-spacing:-0.391px;left:910.6px;"><span style="">Hz</span></div>
<div style="left:690px;top:213px;width:299px;height:1px;background:#000;"></div>
<div style="left:795px;top:220px;width:1px;height:251px;background:#000;box-shadow:1px 0 0 rgba(0,0,0,.25);"></div>
<div style="left:925px;top:222px;width:1px;height:251px;background:#000;box-shadow:-1px 0 0 rgba(0,0,0,.15);"></div>
<div class="t" style="top:221.40px;font-size:12px;line-height:18px;color:#000;font-weight:bold;letter-spacing:-0.231px;left:676.4px;"><span style="">V1 RMS</span></div>
<div class="ind" style="left:674px;top:240px;width:115px;height:28px;"></div>
<div class="t" style="top:244.70px;font-size:16.5px;line-height:18px;color:#000;letter-spacing:-0.759px;left:680.7px;"><span style="">10.25</span></div>
<svg style="left:730px;top:243px;" width="23" height="20" viewBox="0 0 23 20"><path d="M12.70 1.70 L1.30 17.50 H19.50" fill="none" stroke="#000" stroke-width="1.05"/></svg>
<div class="t" style="top:243.00px;font-size:10.5px;line-height:18px;color:#000;font-weight:bold;left:742.1px;"><span style="">3.6</span></div>
<div class="t" style="top:219.80px;font-size:12px;line-height:18px;color:#000;font-weight:bold;letter-spacing:-0.307px;left:803px;"><span style="">A1 RMS</span></div>
<div class="ind" style="left:802px;top:238px;width:115px;height:29px;"></div>
<div class="t" style="top:244.00px;font-size:16.5px;line-height:18px;color:#000;letter-spacing:-0.406px;left:807.5px;"><span style="">0.08</span></div>
<svg style="left:856px;top:243px;" width="23" height="20" viewBox="0 0 23 20"><path d="M12.80 1.70 L1.40 17.50 H19.60" fill="none" stroke="#000" stroke-width="1.05"/></svg>
<div class="t" style="top:244.10px;font-size:10.5px;line-height:18px;color:#000;font-weight:bold;left:868.5px;"><span style="">22.4</span></div>
<div class="t" style="top:221.00px;font-size:12px;line-height:18px;color:#000;font-weight:bold;letter-spacing:-0.193px;left:938.5px;"><span style="">Ch1 Watts</span></div>
<div class="ind" style="left:937px;top:239px;width:66px;height:28px;"></div>
<div class="t" style="top:244.00px;font-size:16.5px;line-height:18px;color:#000;letter-spacing:-0.712px;left:942.2px;"><span style="">0.5</span></div>
<div class="t" style="top:283.00px;font-size:12px;line-height:18px;color:#000;font-weight:bold;letter-spacing:-0.231px;left:676.4px;"><span style="">V2 RMS</span></div>
<div class="ind" style="left:674px;top:301px;width:115px;height:28px;"></div>
<div class="t" style="top:305.80px;font-size:16.5px;line-height:18px;color:#000;letter-spacing:-0.759px;left:680.7px;"><span style="">12.59</span></div>
<svg style="left:730px;top:303px;" width="23" height="20" viewBox="0 0 23 20"><path d="M12.70 1.70 L1.30 17.50 H19.50" fill="none" stroke="#000" stroke-width="1.05"/></svg>
<div class="t" style="top:304.50px;font-size:10.5px;line-height:18px;color:#000;font-weight:bold;left:742.1px;"><span style="">-219.2</span></div>
<div class="t" style="top:282.00px;font-size:12px;line-height:18px;color:#000;font-weight:bold;letter-spacing:-0.307px;left:803px;"><span style="">A2 RMS</span></div>
<div class="ind" style="left:802px;top:301px;width:115px;height:28px;"></div>
<div class="t" style="top:305.70px;font-size:16.5px;line-height:18px;color:#000;letter-spacing:-0.406px;left:807.5px;"><span style="">0.20</span></div>
<svg style="left:856px;top:303px;" width="23" height="20" viewBox="0 0 23 20"><path d="M12.80 1.70 L1.40 17.50 H19.60" fill="none" stroke="#000" stroke-width="1.05"/></svg>
<div class="t" style="top:305.30px;font-size:10.5px;line-height:18px;color:#000;font-weight:bold;left:868.5px;"><span style="">-31.0</span></div>
<div class="t" style="top:282.90px;font-size:12px;line-height:18px;color:#000;font-weight:bold;letter-spacing:-0.193px;left:938.5px;"><span style="">Ch2 Watts</span></div>
<div class="ind" style="left:937px;top:301px;width:66px;height:28px;"></div>
<div class="t" style="top:305.70px;font-size:16.5px;line-height:18px;color:#000;letter-spacing:-0.712px;left:942.2px;"><span style="">1.9</span></div>
<div class="t" style="top:343.60px;font-size:12px;line-height:18px;color:#000;font-weight:bold;letter-spacing:-0.231px;left:676.4px;"><span style="">V3 RMS</span></div>
<div class="ind" style="left:674px;top:361px;width:115px;height:28px;"></div>
<div class="t" style="top:366.50px;font-size:16.5px;line-height:18px;color:#000;letter-spacing:-0.759px;left:680.7px;"><span style="">12.58</span></div>
<svg style="left:730px;top:364px;" width="23" height="20" viewBox="0 0 23 20"><path d="M12.70 1.70 L1.30 17.50 H19.50" fill="none" stroke="#000" stroke-width="1.05"/></svg>
<div class="t" style="top:365.30px;font-size:10.5px;line-height:18px;color:#000;font-weight:bold;left:742.1px;"><span style="">-236.0</span></div>
<div class="t" style="top:342.60px;font-size:12px;line-height:18px;color:#000;font-weight:bold;letter-spacing:-0.307px;left:803px;"><span style="">A3 RMS</span></div>
<div class="ind" style="left:802px;top:361px;width:115px;height:28px;"></div>
<div class="t" style="top:366.70px;font-size:16.5px;line-height:18px;color:#000;letter-spacing:-0.406px;left:807.5px;"><span style="">0.12</span></div>
<svg style="left:856px;top:364px;" width="23" height="20" viewBox="0 0 23 20"><path d="M12.80 1.70 L1.40 17.50 H19.60" fill="none" stroke="#000" stroke-width="1.05"/></svg>
<div class="t" style="top:366.20px;font-size:10.5px;line-height:18px;color:#000;font-weight:bold;left:868.5px;"><span style="">-218.5</span></div>
<div class="t" style="top:343.80px;font-size:12px;line-height:18px;color:#000;font-weight:bold;letter-spacing:-0.193px;left:938.5px;"><span style="">Ch3 Watts</span></div>
<div class="ind" style="left:937px;top:361px;width:66px;height:28px;"></div>
<div class="t" style="top:366.70px;font-size:16.5px;line-height:18px;color:#000;letter-spacing:-0.712px;left:942.2px;"><span style="">1.6</span></div>
<div class="t" style="top:402.10px;font-size:14px;line-height:18px;color:#000;font-weight:bold;letter-spacing:0.098px;left:687.1px;"><span style="">Avg Volts</span></div>
<div class="ind" style="left:686px;top:425px;width:80px;height:28px;"></div>
<div class="t" style="top:429.60px;font-size:16.5px;line-height:18px;color:#000;font-weight:bold;letter-spacing:0.322px;left:692.2px;"><span style="">11.81</span></div>
<div class="t" style="top:399.90px;font-size:14.5px;line-height:18px;color:#000;font-weight:bold;letter-spacing:0.182px;left:815.4px;"><span style="">Avg Amps</span></div>
<div class="ind" style="left:817px;top:425px;width:80px;height:28px;"></div>
<div class="t" style="top:429.60px;font-size:16.5px;line-height:18px;color:#000;font-weight:bold;letter-spacing:0.769px;left:822.2px;"><span style="">0.14</span></div>
<div class="t" style="top:401.70px;font-size:14.5px;line-height:18px;color:#000;font-weight:bold;letter-spacing:0.365px;left:930px;"><span style="">Tot Power</span></div>
<div class="ind" style="left:937px;top:425px;width:66px;height:28px;"></div>
<div class="t" style="top:430.00px;font-size:16.5px;line-height:18px;color:#000;font-weight:bold;letter-spacing:0.554px;left:942.1px;"><span style="">4.0</span></div>
<div style="left:662px;top:478px;width:363px;height:210px;border-left:2px solid #d9d9d9;border-top:2px solid #d9d9d9;border-right:1px solid #4e4e4e;border-bottom:1px solid #4e4e4e;"><div style="left:0;top:0;right:0;bottom:0;border-left:1px solid #4e4e4e;border-top:1px solid #4e4e4e;border-right:2px solid #d9d9d9;border-bottom:2px solid #d9d9d9;"></div></div>
<div class="t" style="top:491.70px;font-size:12.5px;line-height:18px;color:#000;font-weight:bold;letter-spacing:-0.545px;left:682px;"><span style="">Sampling Period (mS)</span></div>
<div style="left:691px;top:513px;width:295px;height:19px;background:#303030;border:1px solid #cfcfcf;border-top-color:#8a8a8a;border-left-color:#8a8a8a;"></div>
<svg style="left:682px;top:514px;" width="9" height="17" viewBox="0 0 9 17"><path d="M1 8.5 L8 1 V16 Z" fill="#8a8a8a" stroke="#d8d8d8" stroke-width="0.7"/></svg>
<svg style="left:987px;top:514px;" width="9" height="19" viewBox="0 0 9 19"><path d="M8.2 9.3 L1 1.2 V17.4 Z" fill="#868686" stroke="#cfcfcf" stroke-width="0.7"/></svg>
<svg style="left:889px;top:509px;" width="14" height="28" viewBox="0 0 14 28"><rect x="2.5" y="2.5" width="9.2" height="23" fill="#3290ee" stroke="#8cc4f6" stroke-width="0.9"/><rect x="5.7" y="3" width="1" height="22" fill="#eaf4ff"/><rect x="7.1" y="3" width="1" height="22" fill="#1a4c88"/></svg>
<div style="left:692.8px;top:536px;width:1px;height:5px;background:#000;"></div><div style="left:713.1px;top:536px;width:1px;height:3px;background:#000;"></div><div style="left:725.1px;top:536px;width:1px;height:3px;background:#000;"></div><div style="left:733.5px;top:536px;width:1px;height:3px;background:#000;"></div><div style="left:740.1px;top:536px;width:1px;height:3px;background:#000;"></div><div style="left:745.4px;top:536px;width:1px;height:3px;background:#000;"></div><div style="left:749.9px;top:536px;width:1px;height:3px;background:#000;"></div><div style="left:753.8px;top:536px;width:1px;height:3px;background:#000;"></div><div style="left:757.3px;top:536px;width:1px;height:3px;background:#000;"></div><div style="left:760.4px;top:536px;width:1px;height:5px;background:#000;"></div><div style="left:780.7px;top:536px;width:1px;height:3px;background:#000;"></div><div style="left:792.7px;top:536px;width:1px;height:3px;background:#000;"></div><div style="left:801.1px;top:536px;width:1px;height:3px;background:#000;"></div><div style="left:807.7px;top:536px;width:1px;height:3px;background:#000;"></div><div style="left:813.0px;top:536px;width:1px;height:3px;background:#000;"></div><div style="left:817.5px;top:536px;width:1px;height:3px;background:#000;"></div><div style="left:821.4px;top:536px;width:1px;height:3px;background:#000;"></div><div style="left:824.9px;top:536px;width:1px;height:3px;background:#000;"></div><div style="left:828.0px;top:536px;width:1px;height:5px;background:#000;"></div><div style="left:848.3px;top:536px;width:1px;height:3px;background:#000;"></div><div style="left:860.3px;top:536px;width:1px;height:3px;background:#000;"></div><div style="left:868.7px;top:536px;width:1px;height:3px;background:#000;"></div><div style="left:875.3px;top:536px;width:1px;height:3px;background:#000;"></div><div style="left:880.6px;top:536px;width:1px;height:3px;background:#000;"></div><div style="left:885.1px;top:536px;width:1px;height:3px;background:#000;"></div><div style="left:889.0px;top:536px;width:1px;height:3px;background:#000;"></div><div style="left:892.5px;top:536px;width:1px;height:3px;background:#000;"></div><div style="left:895.6px;top:536px;width:1px;height:5px;background:#000;"></div><div style="left:915.9px;top:536px;width:1px;height:3px;background:#000;"></div><div style="left:927.9px;top:536px;width:1px;height:3px;background:#000;"></div><div style="left:936.3px;top:536px;width:1px;height:3px;background:#000;"></div><div style="left:942.9px;top:536px;width:1px;height:3px;background:#000;"></div><div style="left:948.2px;top:536px;width:1px;height:3px;background:#000;"></div><div style="left:952.7px;top:536px;width:1px;height:3px;background:#000;"></div><div style="left:956.6px;top:536px;width:1px;height:3px;background:#000;"></div><div style="left:960.1px;top:536px;width:1px;height:3px;background:#000;"></div><div style="left:963.2px;top:536px;width:1px;height:5px;background:#000;"></div><div style="left:983.5px;top:536px;width:1px;height:3px;background:#000;"></div>
<div style="left:984px;top:536px;width:1px;height:5px;background:#000;"></div>
<div class="t" style="top:539.70px;font-size:12.5px;line-height:18px;color:#000;font-weight:bold;left:492px;width:400.000px;text-align:center;"><span style="">0.1</span></div>
<div class="t" style="top:539.70px;font-size:12.5px;line-height:18px;color:#000;font-weight:bold;left:560.5px;width:400.000px;text-align:center;"><span style="">1</span></div>
<div class="t" style="top:539.70px;font-size:12.5px;line-height:18px;color:#000;font-weight:bold;left:628.6px;width:400.000px;text-align:center;"><span style="">10</span></div>
<div class="t" style="top:539.70px;font-size:12.5px;line-height:18px;color:#000;font-weight:bold;left:696.5px;width:400.000px;text-align:center;"><span style="">100</span></div>
<div class="t" style="top:539.70px;font-size:12.5px;line-height:18px;color:#000;font-weight:bold;left:784px;width:400.000px;text-align:center;"><span style="">2000</span></div>
<div class="t" style="top:574.80px;font-size:12.5px;line-height:18px;color:#000;font-weight:bold;letter-spacing:-0.377px;left:689.6px;"><span style="">Filter</span></div>
<div class="btn" style="left:679px;top:594px;width:57px;height:26px;"></div>
<div class="t" style="top:598.40px;font-size:12.5px;line-height:18px;color:#000;font-weight:bold;letter-spacing:-1.233px;left:506.79999999999995px;width:398.767px;text-align:center;"><span style="">OFF</span></div>
<div style="left:762px;top:571px;width:126px;height:16px;background:#c7c7c7;"></div>
<div class="t" style="top:569.80px;font-size:12.5px;line-height:18px;color:#8a8a8a;font-weight:bold;letter-spacing:-0.360px;left:763px;"><span style="">Cutoff Frequency (Hz)</span></div>
<div style="left:752.5px;top:595px;width:245.5px;height:27.3px;background:#c8c8c8;"></div>
<div style="left:867px;top:615.4px;width:13px;height:7px;background:#b3b3b3;"></div>
<svg style="left:760px;top:594px;" width="232" height="23" viewBox="0 0 232 23"><rect x="1.9" y="1.9" width="226.8" height="18.2" fill="#919191" stroke="#a6a6a6" stroke-width="0.8"/></svg>
<svg style="left:753.5px;top:597px;" width="8" height="17" viewBox="0 0 8 17"><path d="M1 8.5 L7 1 V16 Z" fill="#bdbdbd" stroke="#9c9c9c" stroke-width="0.7"/></svg>
<svg style="left:990px;top:597px;" width="8" height="17" viewBox="0 0 8 17"><path d="M7 8.5 L1 1 V16 Z" fill="#bdbdbd" stroke="#9c9c9c" stroke-width="0.7"/></svg>
<div style="left:751px;top:622.3px;width:259px;height:20.4px;background:#c9c9c9;"></div>
<div style="left:762.5px;top:622.3px;width:1px;height:5px;background:#8a8a8a;"></div><div style="left:785.0px;top:622.3px;width:1px;height:3px;background:#8a8a8a;"></div><div style="left:798.2px;top:622.3px;width:1px;height:3px;background:#8a8a8a;"></div><div style="left:807.6px;top:622.3px;width:1px;height:3px;background:#8a8a8a;"></div><div style="left:814.9px;top:622.3px;width:1px;height:3px;background:#8a8a8a;"></div><div style="left:820.8px;top:622.3px;width:1px;height:3px;background:#8a8a8a;"></div><div style="left:825.8px;top:622.3px;width:1px;height:3px;background:#8a8a8a;"></div><div style="left:830.1px;top:622.3px;width:1px;height:3px;background:#8a8a8a;"></div><div style="left:834.0px;top:622.3px;width:1px;height:3px;background:#8a8a8a;"></div><div style="left:837.4px;top:622.3px;width:1px;height:5px;background:#8a8a8a;"></div><div style="left:859.9px;top:622.3px;width:1px;height:3px;background:#8a8a8a;"></div><div style="left:873.1px;top:622.3px;width:1px;height:3px;background:#8a8a8a;"></div><div style="left:882.5px;top:622.3px;width:1px;height:3px;background:#8a8a8a;"></div><div style="left:889.8px;top:622.3px;width:1px;height:3px;background:#8a8a8a;"></div><div style="left:895.7px;top:622.3px;width:1px;height:3px;background:#8a8a8a;"></div><div style="left:900.7px;top:622.3px;width:1px;height:3px;background:#8a8a8a;"></div><div style="left:905.0px;top:622.3px;width:1px;height:3px;background:#8a8a8a;"></div><div style="left:908.9px;top:622.3px;width:1px;height:3px;background:#8a8a8a;"></div><div style="left:912.3px;top:622.3px;width:1px;height:5px;background:#8a8a8a;"></div><div style="left:934.8px;top:622.3px;width:1px;height:3px;background:#8a8a8a;"></div><div style="left:948.0px;top:622.3px;width:1px;height:3px;background:#8a8a8a;"></div><div style="left:957.4px;top:622.3px;width:1px;height:3px;background:#8a8a8a;"></div><div style="left:964.7px;top:622.3px;width:1px;height:3px;background:#8a8a8a;"></div><div style="left:970.6px;top:622.3px;width:1px;height:3px;background:#8a8a8a;"></div><div style="left:975.6px;top:622.3px;width:1px;height:3px;background:#8a8a8a;"></div><div style="left:979.9px;top:622.3px;width:1px;height:3px;background:#8a8a8a;"></div><div style="left:983.8px;top:622.3px;width:1px;height:3px;background:#8a8a8a;"></div><div style="left:987.2px;top:622.3px;width:1px;height:5px;background:#8a8a8a;"></div>
<svg style="left:866px;top:589px;" width="16" height="34" viewBox="0 0 16 34"><path d="M0.8 0.6 H13.8 L7.4 31.2 Z" fill="#8ec4f8" stroke="#d2e6fb" stroke-width="0.9"/><path d="M7.3 2 V29" stroke="#5b9fe3" stroke-width="0.8"/></svg>
<div class="t" style="top:625.90px;font-size:12.5px;line-height:18px;color:#8a8a8a;letter-spacing:-0.120px;left:752.5px;"><span style="-webkit-text-stroke:0.25px #8a8a8a;">100</span></div>
<div class="t" style="top:625.90px;font-size:12.5px;line-height:18px;color:#8a8a8a;letter-spacing:-0.453px;left:825.6px;"><span style="-webkit-text-stroke:0.25px #8a8a8a;">1000</span></div>
<div class="t" style="top:625.90px;font-size:12.5px;line-height:18px;color:#8a8a8a;letter-spacing:-0.253px;left:895.3px;"><span style="-webkit-text-stroke:0.25px #8a8a8a;">10000</span></div>
<div class="t" style="top:625.90px;font-size:12.5px;line-height:18px;color:#8a8a8a;letter-spacing:-0.286px;left:967.7px;"><span style="-webkit-text-stroke:0.25px #8a8a8a;">100000</span></div>
<div style="left:9px;top:692px;width:1016px;height:74px;border-left:2px solid #d9d9d9;border-top:2px solid #d9d9d9;border-right:1px solid #4e4e4e;border-bottom:1px solid #4e4e4e;"><div style="left:0;top:0;right:0;bottom:0;border-left:1px solid #4e4e4e;border-top:1px solid #4e4e4e;border-right:2px solid #d9d9d9;border-bottom:2px solid #d9d9d9;"></div></div>
<div class="btn" style="left:127px;top:705px;width:79px;height:41px;background:#b3b3b3;"></div>
<div class="t" style="top:717.00px;font-size:12.5px;line-height:18px;color:#fb0000;font-weight:bold;letter-spacing:-0.269px;left:148.5px;"><span style="">Pause</span></div>
<div style="left:244px;top:705px;width:81px;height:41px;background:#d0d0d0;border:1px solid #8c8c8c;box-shadow:inset 1px 1px 0 #f4f4f4,inset -1px -1px 0 #8c8c8c;"></div>
<div class="t" style="top:710.20px;font-size:12.5px;line-height:18px;color:#7e7e7e;font-weight:bold;letter-spacing:-1.251px;left:271px;"><span style="">Save</span></div>
<div class="t" style="top:723.00px;font-size:12.5px;line-height:18px;color:#7e7e7e;font-weight:bold;letter-spacing:-0.973px;left:271.6px;"><span style="">Data</span></div>
<div style="left:362.5px;top:706.3px;width:199.89999999999998px;height:23.90000000000009px;background:#c7c7c7;"></div>
<svg style="left:375px;top:707px;" width="180" height="23" viewBox="0 0 180 23"><rect x="1.40" y="1.00" width="176.00" height="19.70" fill="#919191" stroke="#a6a6a6" stroke-width="0.8"/></svg>
<svg style="left:362px;top:708px;" width="12" height="21" viewBox="0 0 12 21"><path d="M1.80 9.85 L6.80 1.00 V18.70 Z" fill="#bdbdbd" stroke="#9c9c9c" stroke-width="0.7"/></svg>
<svg style="left:553px;top:708px;" width="12" height="21" viewBox="0 0 12 21"><path d="M8.70 9.85 L1.90 1.00 V18.70 Z" fill="#bdbdbd" stroke="#9c9c9c" stroke-width="0.7"/></svg>
<svg style="left:367px;top:704px;" width="14" height="30" viewBox="0 0 14 30"><rect x="1.80" y="1.00" width="8.30" height="26.50" fill="#8cc2f6" stroke="#cfe4fb" stroke-width="0.9"/><rect x="4.05" y="1.50" width="1" height="25.50" fill="#e6f2fe"/><rect x="5.45" y="1.50" width="1" height="25.50" fill="#5b9fe3"/><rect x="6.85" y="1.50" width="1" height="25.50" fill="#e6f2fe"/></svg>
<div style="left:571.2px;top:708px;width:34.0px;height:14.700000000000045px;background:#c7c7c7;"></div>
<div class="t" style="top:706.90px;font-size:12.5px;line-height:18px;color:#8a8a8a;font-weight:bold;letter-spacing:-0.958px;left:572.5px;"><span style="">Zoom</span></div>
<div style="left:368.8px;top:732.7px;width:190.40000000000003px;height:21.299999999999955px;background:#c9c9c9;"></div>
<div style="left:372.6px;top:732.7px;width:1px;height:4.5px;background:#8a8a8a;"></div><div style="left:377.2px;top:732.7px;width:1px;height:3px;background:#8a8a8a;"></div><div style="left:386.3px;top:732.7px;width:1px;height:3px;background:#8a8a8a;"></div><div style="left:395.5px;top:732.7px;width:1px;height:3px;background:#8a8a8a;"></div><div style="left:404.6px;top:732.7px;width:1px;height:3px;background:#8a8a8a;"></div><div style="left:413.8px;top:732.7px;width:1px;height:4.5px;background:#8a8a8a;"></div><div style="left:422.9px;top:732.7px;width:1px;height:3px;background:#8a8a8a;"></div><div style="left:432.1px;top:732.7px;width:1px;height:3px;background:#8a8a8a;"></div><div style="left:441.3px;top:732.7px;width:1px;height:3px;background:#8a8a8a;"></div><div style="left:450.4px;top:732.7px;width:1px;height:3px;background:#8a8a8a;"></div><div style="left:459.6px;top:732.7px;width:1px;height:4.5px;background:#8a8a8a;"></div><div style="left:468.7px;top:732.7px;width:1px;height:3px;background:#8a8a8a;"></div><div style="left:477.9px;top:732.7px;width:1px;height:3px;background:#8a8a8a;"></div><div style="left:487.0px;top:732.7px;width:1px;height:3px;background:#8a8a8a;"></div><div style="left:496.2px;top:732.7px;width:1px;height:3px;background:#8a8a8a;"></div><div style="left:505.3px;top:732.7px;width:1px;height:4.5px;background:#8a8a8a;"></div><div style="left:514.5px;top:732.7px;width:1px;height:3px;background:#8a8a8a;"></div><div style="left:523.6px;top:732.7px;width:1px;height:3px;background:#8a8a8a;"></div><div style="left:532.8px;top:732.7px;width:1px;height:3px;background:#8a8a8a;"></div><div style="left:541.9px;top:732.7px;width:1px;height:3px;background:#8a8a8a;"></div><div style="left:551.1px;top:732.7px;width:1px;height:4.5px;background:#8a8a8a;"></div>
<div class="t" style="top:736.80px;font-size:12px;line-height:18px;color:#8a8a8a;left:172.8px;width:400.000px;text-align:center;"><span style="letter-spacing:-0.2px;-webkit-text-stroke:0.25px #8a8a8a;">1</span></div>
<div class="t" style="top:736.80px;font-size:12px;line-height:18px;color:#8a8a8a;left:214.60000000000002px;width:400.000px;text-align:center;"><span style="letter-spacing:-0.2px;-webkit-text-stroke:0.25px #8a8a8a;">10</span></div>
<div class="t" style="top:736.80px;font-size:12px;line-height:18px;color:#8a8a8a;left:260.1px;width:400.000px;text-align:center;"><span style="letter-spacing:-0.2px;-webkit-text-stroke:0.25px #8a8a8a;">20</span></div>
<div class="t" style="top:736.80px;font-size:12px;line-height:18px;color:#8a8a8a;left:305.6px;width:400.000px;text-align:center;"><span style="letter-spacing:-0.2px;-webkit-text-stroke:0.25px #8a8a8a;">30</span></div>
<div class="t" style="top:736.80px;font-size:12px;line-height:18px;color:#8a8a8a;left:351.20000000000005px;width:400.000px;text-align:center;"><span style="letter-spacing:-0.2px;-webkit-text-stroke:0.25px #8a8a8a;">40</span></div>
<div style="left:645.7px;top:706.8px;width:209.39999999999998px;height:20.40000000000009px;background:#c7c7c7;"></div>
<svg style="left:657px;top:707px;" width="191" height="20" viewBox="0 0 191 20"><rect x="1.80" y="1.20" width="187.10" height="16.80" fill="#919191" stroke="#a6a6a6" stroke-width="0.8"/></svg>
<svg style="left:645px;top:708px;" width="12" height="18" viewBox="0 0 12 18"><path d="M1.80 8.60 L6.80 1.20 V16.00 Z" fill="#bdbdbd" stroke="#9c9c9c" stroke-width="0.7"/></svg>
<svg style="left:847px;top:708px;" width="12" height="18" viewBox="0 0 12 18"><path d="M7.60 8.60 L1.10 1.20 V16.00 Z" fill="#bdbdbd" stroke="#9c9c9c" stroke-width="0.7"/></svg>
<svg style="left:650px;top:703px;" width="14" height="27" viewBox="0 0 14 27"><rect x="1.80" y="1.80" width="7.90" height="23.90" fill="#8cc2f6" stroke="#cfe4fb" stroke-width="0.9"/><rect x="3.85" y="2.30" width="1" height="22.90" fill="#e6f2fe"/><rect x="5.25" y="2.30" width="1" height="22.90" fill="#5b9fe3"/><rect x="6.65" y="2.30" width="1" height="22.90" fill="#e6f2fe"/></svg>
<div style="left:860.2px;top:708.2px;width:45.39999999999998px;height:14.799999999999955px;background:#c7c7c7;"></div>
<div class="t" style="top:707.00px;font-size:12.5px;line-height:18px;color:#8a8a8a;font-weight:bold;letter-spacing:-0.939px;left:861.6px;"><span style="">Position</span></div>
<div style="left:651.8px;top:729.2px;width:197.70000000000005px;height:21.799999999999955px;background:#c9c9c9;"></div>
<div style="left:656.1px;top:729.2px;width:1px;height:4.5px;background:#8a8a8a;"></div><div style="left:665.5px;top:729.2px;width:1px;height:3px;background:#8a8a8a;"></div><div style="left:674.9px;top:729.2px;width:1px;height:3px;background:#8a8a8a;"></div><div style="left:684.3px;top:729.2px;width:1px;height:3px;background:#8a8a8a;"></div><div style="left:693.7px;top:729.2px;width:1px;height:4.5px;background:#8a8a8a;"></div><div style="left:703.1px;top:729.2px;width:1px;height:3px;background:#8a8a8a;"></div><div style="left:712.6px;top:729.2px;width:1px;height:3px;background:#8a8a8a;"></div><div style="left:722.0px;top:729.2px;width:1px;height:3px;background:#8a8a8a;"></div><div style="left:731.4px;top:729.2px;width:1px;height:4.5px;background:#8a8a8a;"></div><div style="left:740.8px;top:729.2px;width:1px;height:3px;background:#8a8a8a;"></div><div style="left:750.2px;top:729.2px;width:1px;height:3px;background:#8a8a8a;"></div><div style="left:759.6px;top:729.2px;width:1px;height:3px;background:#8a8a8a;"></div><div style="left:769.0px;top:729.2px;width:1px;height:4.5px;background:#8a8a8a;"></div><div style="left:778.4px;top:729.2px;width:1px;height:3px;background:#8a8a8a;"></div><div style="left:787.8px;top:729.2px;width:1px;height:3px;background:#8a8a8a;"></div><div style="left:797.2px;top:729.2px;width:1px;height:3px;background:#8a8a8a;"></div><div style="left:806.7px;top:729.2px;width:1px;height:4.5px;background:#8a8a8a;"></div><div style="left:816.1px;top:729.2px;width:1px;height:3px;background:#8a8a8a;"></div><div style="left:825.5px;top:729.2px;width:1px;height:3px;background:#8a8a8a;"></div><div style="left:834.9px;top:729.2px;width:1px;height:3px;background:#8a8a8a;"></div><div style="left:844.3px;top:729.2px;width:1px;height:4.5px;background:#8a8a8a;"></div>
<div class="t" style="top:733.70px;font-size:12px;line-height:18px;color:#8a8a8a;left:456px;width:400.000px;text-align:center;"><span style="letter-spacing:-0.2px;-webkit-text-stroke:0.25px #8a8a8a;">0</span></div>
<div class="t" style="top:733.70px;font-size:12px;line-height:18px;color:#8a8a8a;left:493.9px;width:400.000px;text-align:center;"><span style="letter-spacing:-0.2px;-webkit-text-stroke:0.25px #8a8a8a;">0.2</span></div>
<div class="t" style="top:733.70px;font-size:12px;line-height:18px;color:#8a8a8a;left:531.5px;width:400.000px;text-align:center;"><span style="letter-spacing:-0.2px;-webkit-text-stroke:0.25px #8a8a8a;">0.4</span></div>
<div class="t" style="top:733.70px;font-size:12px;line-height:18px;color:#8a8a8a;left:569.3px;width:400.000px;text-align:center;"><span style="letter-spacing:-0.2px;-webkit-text-stroke:0.25px #8a8a8a;">0.6</span></div>
<div class="t" style="top:733.70px;font-size:12px;line-height:18px;color:#8a8a8a;left:606.8px;width:400.000px;text-align:center;"><span style="letter-spacing:-0.2px;-webkit-text-stroke:0.25px #8a8a8a;">0.8</span></div>
<div class="t" style="top:733.70px;font-size:12px;line-height:18px;color:#8a8a8a;left:644px;width:400.000px;text-align:center;"><span style="letter-spacing:-0.2px;-webkit-text-stroke:0.25px #8a8a8a;">1</span></div>
</body></html>
